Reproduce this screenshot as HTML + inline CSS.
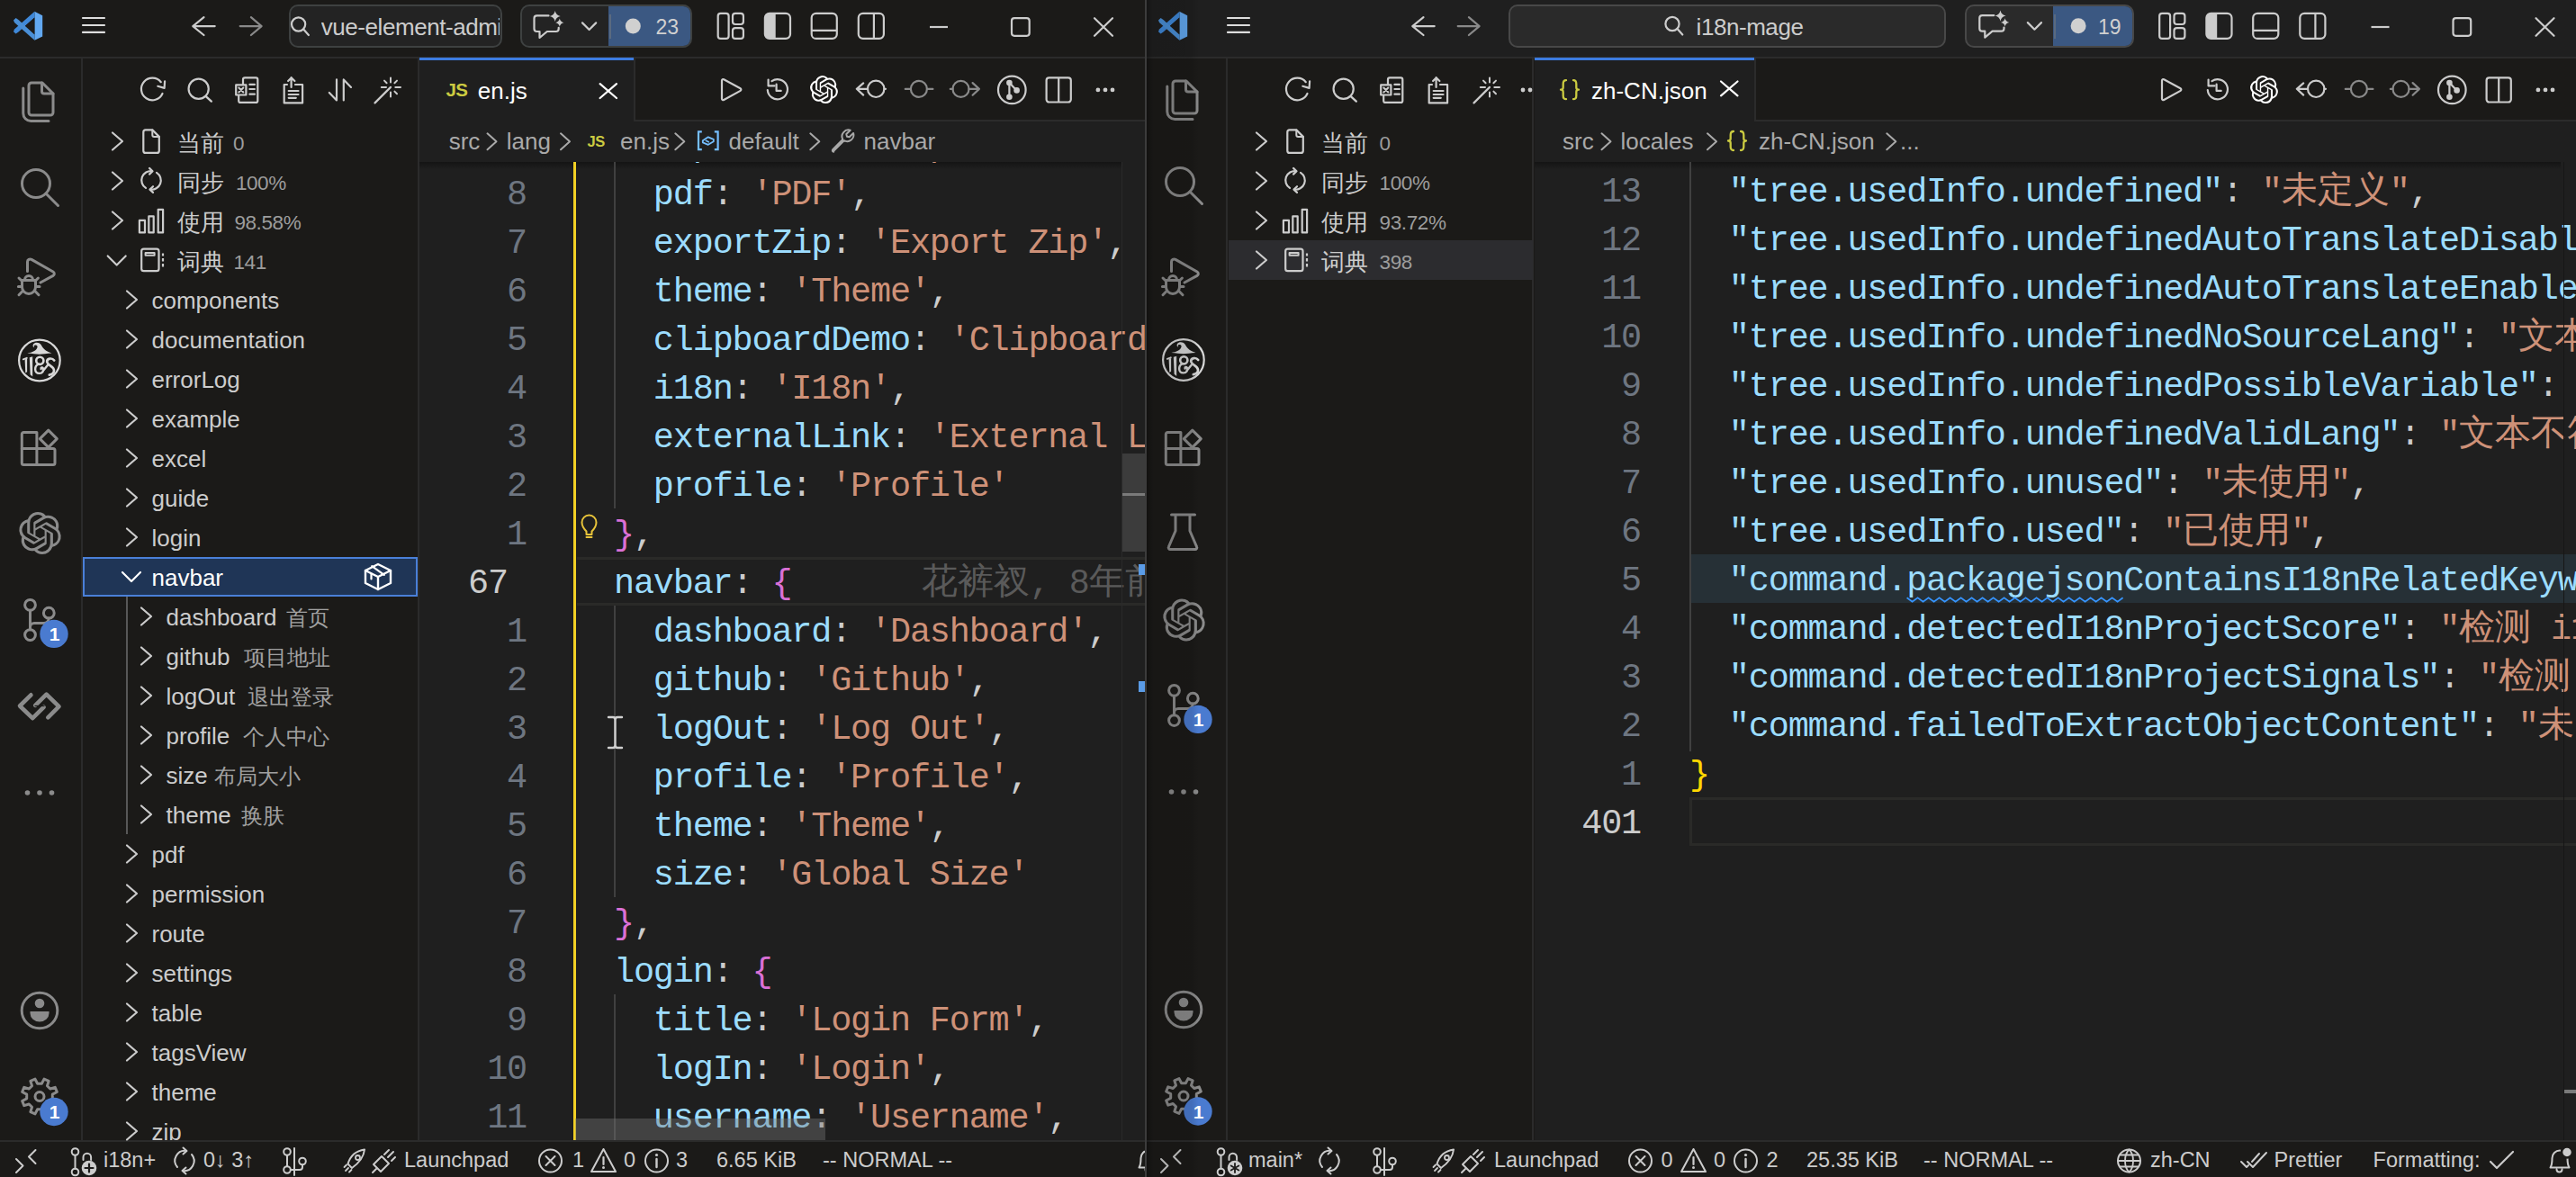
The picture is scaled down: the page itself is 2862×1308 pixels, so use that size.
<!DOCTYPE html><html><head><meta charset="utf-8"><title>VS Code</title><style>
html,body{margin:0;padding:0;width:2862px;height:1308px;overflow:hidden;background:#1b1a18}
.a{position:absolute}
.t{white-space:pre}
.code{white-space:pre;font-family:"Liberation Mono",monospace;font-size:38.5px;letter-spacing:-1.18px}
.cjk{font-size:40px;display:inline-block;width:40px;text-align:center;line-height:0;letter-spacing:0}
svg{overflow:visible}
</style></head><body><div class="a" style="left:0px;top:0px;width:1272px;height:1308px;background:#1b1a18;"></div>
<div class="a" style="left:0px;top:63px;width:1272px;height:2px;background:#2b2b2b;"></div>
<div class="a" style="left:90px;top:65px;width:2px;height:1202px;background:#2b2b2b;"></div>
<div class="a" style="left:464px;top:65px;width:2px;height:1202px;background:#2b2b2b;"></div>
<div class="a" style="left:0px;top:1267px;width:1272px;height:2px;background:#2b2b2b;"></div>
<div class="a" style="left:321.4px;top:5px;width:236.3px;height:47.5px;background:#232323;border:2px solid #3e4141;border-radius:10px;box-sizing:border-box;"></div>
<div class="a t" style="left:356.8px;top:13.79px;line-height:32px;font-size:26px;color:#cccccc;font-family:'Liberation Sans', sans-serif;width:197.90000000000003px;overflow:hidden;letter-spacing:-0.45px;">vue-element-admin</div>
<div class="a" style="left:578.2px;top:5px;width:191.0px;height:47.5px;background:#232323;border:2px solid #3e4141;border-radius:10px;box-sizing:border-box;"></div>
<div class="a" style="left:676px;top:7px;width:91.20000000000005px;height:43.5px;background:#3b5882;border-radius:0 8px 8px 0;"></div>
<div class="a" style="left:677px;top:16px;width:2px;height:27px;background:#5a6a80;"></div>
<div class="a t" style="left:728.5px;top:15.73px;line-height:29px;font-size:23px;color:#d0d0d0;font-family:'Liberation Sans', sans-serif;">23</div>
<div class="a t" style="left:196.5px;top:142.56px;line-height:32px;font-size:25.5px;color:#cccccc;font-family:'Liberation Sans', sans-serif;">当前</div>
<div class="a t" style="left:259px;top:145.60px;line-height:28px;font-size:22.5px;color:#9d9d9d;font-family:'Liberation Sans', sans-serif;letter-spacing:-0.4px;">0</div>
<div class="a t" style="left:196.5px;top:186.56px;line-height:32px;font-size:25.5px;color:#cccccc;font-family:'Liberation Sans', sans-serif;">同步</div>
<div class="a t" style="left:261.9px;top:189.60px;line-height:28px;font-size:22.5px;color:#9d9d9d;font-family:'Liberation Sans', sans-serif;letter-spacing:-0.4px;">100%</div>
<div class="a t" style="left:196.5px;top:230.56px;line-height:32px;font-size:25.5px;color:#cccccc;font-family:'Liberation Sans', sans-serif;">使用</div>
<div class="a t" style="left:260.4px;top:233.60px;line-height:28px;font-size:22.5px;color:#9d9d9d;font-family:'Liberation Sans', sans-serif;letter-spacing:-0.4px;">98.58%</div>
<div class="a t" style="left:196.5px;top:274.56px;line-height:32px;font-size:25.5px;color:#cccccc;font-family:'Liberation Sans', sans-serif;">词典</div>
<div class="a t" style="left:259.5px;top:277.60px;line-height:28px;font-size:22.5px;color:#9d9d9d;font-family:'Liberation Sans', sans-serif;letter-spacing:-0.4px;">141</div>
<div class="a t" style="left:168.5px;top:317.99px;line-height:32px;font-size:26px;color:#cccccc;font-family:'Liberation Sans', sans-serif;">components</div>
<div class="a t" style="left:168.5px;top:361.99px;line-height:32px;font-size:26px;color:#cccccc;font-family:'Liberation Sans', sans-serif;">documentation</div>
<div class="a t" style="left:168.5px;top:405.99px;line-height:32px;font-size:26px;color:#cccccc;font-family:'Liberation Sans', sans-serif;">errorLog</div>
<div class="a t" style="left:168.5px;top:449.99px;line-height:32px;font-size:26px;color:#cccccc;font-family:'Liberation Sans', sans-serif;">example</div>
<div class="a t" style="left:168.5px;top:493.99px;line-height:32px;font-size:26px;color:#cccccc;font-family:'Liberation Sans', sans-serif;">excel</div>
<div class="a t" style="left:168.5px;top:537.99px;line-height:32px;font-size:26px;color:#cccccc;font-family:'Liberation Sans', sans-serif;">guide</div>
<div class="a t" style="left:168.5px;top:581.99px;line-height:32px;font-size:26px;color:#cccccc;font-family:'Liberation Sans', sans-serif;">login</div>
<div class="a" style="left:92px;top:619px;width:372px;height:44px;background:#1f3556;border:2px solid #4a80d8;box-sizing:border-box;"></div>
<div class="a t" style="left:168.5px;top:625.99px;line-height:32px;font-size:26px;color:#ffffff;font-family:'Liberation Sans', sans-serif;">navbar</div>
<div class="a" style="left:139.5px;top:663px;width:2px;height:264px;background:#585858;"></div>
<div class="a t" style="left:184.5px;top:669.99px;line-height:32px;font-size:26px;color:#cccccc;font-family:'Liberation Sans', sans-serif;">dashboard</div>
<div class="a t" style="left:318px;top:672.18px;line-height:30px;font-size:24px;color:#a0a0a0;font-family:'Liberation Sans', sans-serif;">首页</div>
<div class="a t" style="left:184.5px;top:713.99px;line-height:32px;font-size:26px;color:#cccccc;font-family:'Liberation Sans', sans-serif;">github</div>
<div class="a t" style="left:271px;top:716.18px;line-height:30px;font-size:24px;color:#a0a0a0;font-family:'Liberation Sans', sans-serif;">项目地址</div>
<div class="a t" style="left:184.5px;top:757.99px;line-height:32px;font-size:26px;color:#cccccc;font-family:'Liberation Sans', sans-serif;">logOut</div>
<div class="a t" style="left:275px;top:760.18px;line-height:30px;font-size:24px;color:#a0a0a0;font-family:'Liberation Sans', sans-serif;">退出登录</div>
<div class="a t" style="left:184.5px;top:801.99px;line-height:32px;font-size:26px;color:#cccccc;font-family:'Liberation Sans', sans-serif;">profile</div>
<div class="a t" style="left:270px;top:804.18px;line-height:30px;font-size:24px;color:#a0a0a0;font-family:'Liberation Sans', sans-serif;">个人中心</div>
<div class="a t" style="left:184.5px;top:845.99px;line-height:32px;font-size:26px;color:#cccccc;font-family:'Liberation Sans', sans-serif;">size</div>
<div class="a t" style="left:238px;top:848.18px;line-height:30px;font-size:24px;color:#a0a0a0;font-family:'Liberation Sans', sans-serif;">布局大小</div>
<div class="a t" style="left:184.5px;top:889.99px;line-height:32px;font-size:26px;color:#cccccc;font-family:'Liberation Sans', sans-serif;">theme</div>
<div class="a t" style="left:268px;top:892.18px;line-height:30px;font-size:24px;color:#a0a0a0;font-family:'Liberation Sans', sans-serif;">换肤</div>
<div class="a t" style="left:168.5px;top:933.99px;line-height:32px;font-size:26px;color:#cccccc;font-family:'Liberation Sans', sans-serif;">pdf</div>
<div class="a t" style="left:168.5px;top:977.99px;line-height:32px;font-size:26px;color:#cccccc;font-family:'Liberation Sans', sans-serif;">permission</div>
<div class="a t" style="left:168.5px;top:1021.99px;line-height:32px;font-size:26px;color:#cccccc;font-family:'Liberation Sans', sans-serif;">route</div>
<div class="a t" style="left:168.5px;top:1065.99px;line-height:32px;font-size:26px;color:#cccccc;font-family:'Liberation Sans', sans-serif;">settings</div>
<div class="a t" style="left:168.5px;top:1109.99px;line-height:32px;font-size:26px;color:#cccccc;font-family:'Liberation Sans', sans-serif;">table</div>
<div class="a t" style="left:168.5px;top:1153.99px;line-height:32px;font-size:26px;color:#cccccc;font-family:'Liberation Sans', sans-serif;">tagsView</div>
<div class="a t" style="left:168.5px;top:1197.99px;line-height:32px;font-size:26px;color:#cccccc;font-family:'Liberation Sans', sans-serif;">theme</div>
<div class="a t" style="left:168.5px;top:1241.99px;line-height:32px;font-size:26px;color:#cccccc;font-family:'Liberation Sans', sans-serif;">zip</div>
<div class="a" style="left:466px;top:135px;width:806px;height:1132px;background:#1f1f1f;"></div>
<div class="a" style="left:466px;top:65px;width:806px;height:68px;background:#1b1a18;"></div>
<div class="a" style="left:466px;top:133px;width:806px;height:2px;background:#2b2b2b;"></div>
<div class="a" style="left:466px;top:65px;width:238px;height:70px;background:#1f1f1f;"></div>
<div class="a" style="left:466px;top:64px;width:238px;height:3px;background:#3c7be0;"></div>
<div class="a" style="left:704px;top:65px;width:2px;height:68px;background:#2b2b2b;"></div>
<div class="a t" style="left:495.5px;top:86.80px;line-height:26px;font-size:20.5px;color:#cbcb41;font-family:'Liberation Sans', sans-serif;font-weight:bold;letter-spacing:-0.6px;">JS</div>
<div class="a t" style="left:530.8px;top:84.89px;line-height:32px;font-size:26px;color:#ffffff;font-family:'Liberation Sans', sans-serif;">en.js</div>
<div class="a t" style="left:498.7px;top:141.49px;line-height:32px;font-size:26px;color:#a9a9a9;font-family:'Liberation Sans', sans-serif;">src</div>
<div class="a t" style="left:562.8px;top:141.49px;line-height:32px;font-size:26px;color:#a9a9a9;font-family:'Liberation Sans', sans-serif;">lang</div>
<div class="a t" style="left:652.5px;top:147.28px;line-height:21px;font-size:16.5px;color:#cbcb41;font-family:'Liberation Sans', sans-serif;font-weight:bold;letter-spacing:-0.4px;">JS</div>
<div class="a t" style="left:689px;top:141.49px;line-height:32px;font-size:26px;color:#a9a9a9;font-family:'Liberation Sans', sans-serif;">en.js</div>
<div class="a t" style="left:809.6px;top:141.49px;line-height:32px;font-size:26px;color:#a9a9a9;font-family:'Liberation Sans', sans-serif;">default</div>
<div class="a t" style="left:959.6px;top:141.49px;line-height:32px;font-size:26px;color:#a9a9a9;font-family:'Liberation Sans', sans-serif;">navbar</div>
<div class="a" style="left:466px;top:180px;width:780px;height:8px;background:linear-gradient(#111 0%, rgba(0,0,0,0) 100%);opacity:.8;"></div>
<div class="a" style="left:641px;top:619px;width:631px;height:54px;border-top:3px solid #2a2a28;border-bottom:3px solid #2a2a28;box-sizing:border-box;"></div>
<div class="a" style="left:682px;top:180px;width:2px;height:385px;background:#404040;"></div>
<div class="a" style="left:682px;top:673px;width:2px;height:324px;background:#404040;"></div>
<div class="a" style="left:682px;top:1105px;width:2px;height:162px;background:#404040;"></div>
<div class="a" style="left:637px;top:180px;width:3px;height:1087px;background:#f2d024;"></div>
<div class="a" style="left:466px;top:180px;width:806px;height:1087px;overflow:hidden">
<div class="a code" style="left:216px;top:-44px;height:54px;line-height:54px;"><span style="color:#cccccc">  </span><span style="color:#9cdcfe">exportPDF</span><span style="color:#cccccc">: </span><span style="color:#ce9178">&#x27;Export PDF&#x27;</span><span style="color:#cccccc">,</span></div>
<div class="a code" style="left:216px;top:10px;height:54px;line-height:54px;"><span style="color:#cccccc">  </span><span style="color:#9cdcfe">pdf</span><span style="color:#cccccc">: </span><span style="color:#ce9178">&#x27;PDF&#x27;</span><span style="color:#cccccc">,</span></div>
<div class="a code" style="left:0px;top:10px;height:54px;line-height:54px;width:119px;text-align:right;color:#6e7681">8</div>
<div class="a code" style="left:216px;top:64px;height:54px;line-height:54px;"><span style="color:#cccccc">  </span><span style="color:#9cdcfe">exportZip</span><span style="color:#cccccc">: </span><span style="color:#ce9178">&#x27;Export Zip&#x27;</span><span style="color:#cccccc">,</span></div>
<div class="a code" style="left:0px;top:64px;height:54px;line-height:54px;width:119px;text-align:right;color:#6e7681">7</div>
<div class="a code" style="left:216px;top:118px;height:54px;line-height:54px;"><span style="color:#cccccc">  </span><span style="color:#9cdcfe">theme</span><span style="color:#cccccc">: </span><span style="color:#ce9178">&#x27;Theme&#x27;</span><span style="color:#cccccc">,</span></div>
<div class="a code" style="left:0px;top:118px;height:54px;line-height:54px;width:119px;text-align:right;color:#6e7681">6</div>
<div class="a code" style="left:216px;top:172px;height:54px;line-height:54px;"><span style="color:#cccccc">  </span><span style="color:#9cdcfe">clipboardDemo</span><span style="color:#cccccc">: </span><span style="color:#ce9178">&#x27;Clipboard Demo&#x27;</span><span style="color:#cccccc">,</span></div>
<div class="a code" style="left:0px;top:172px;height:54px;line-height:54px;width:119px;text-align:right;color:#6e7681">5</div>
<div class="a code" style="left:216px;top:226px;height:54px;line-height:54px;"><span style="color:#cccccc">  </span><span style="color:#9cdcfe">i18n</span><span style="color:#cccccc">: </span><span style="color:#ce9178">&#x27;I18n&#x27;</span><span style="color:#cccccc">,</span></div>
<div class="a code" style="left:0px;top:226px;height:54px;line-height:54px;width:119px;text-align:right;color:#6e7681">4</div>
<div class="a code" style="left:216px;top:280px;height:54px;line-height:54px;"><span style="color:#cccccc">  </span><span style="color:#9cdcfe">externalLink</span><span style="color:#cccccc">: </span><span style="color:#ce9178">&#x27;External Link&#x27;</span><span style="color:#cccccc">,</span></div>
<div class="a code" style="left:0px;top:280px;height:54px;line-height:54px;width:119px;text-align:right;color:#6e7681">3</div>
<div class="a code" style="left:216px;top:334px;height:54px;line-height:54px;"><span style="color:#cccccc">  </span><span style="color:#9cdcfe">profile</span><span style="color:#cccccc">: </span><span style="color:#ce9178">&#x27;Profile&#x27;</span></div>
<div class="a code" style="left:0px;top:334px;height:54px;line-height:54px;width:119px;text-align:right;color:#6e7681">2</div>
<div class="a code" style="left:216px;top:388px;height:54px;line-height:54px;"><span style="color:#da70d6">}</span><span style="color:#cccccc">,</span></div>
<div class="a code" style="left:0px;top:388px;height:54px;line-height:54px;width:119px;text-align:right;color:#6e7681">1</div>
<div class="a code" style="left:216px;top:442px;height:54px;line-height:54px;"><span style="color:#9cdcfe">navbar</span><span style="color:#cccccc">: </span><span style="color:#da70d6">{</span></div>
<div class="a code" style="left:54px;top:442px;height:54px;line-height:54px;color:#cccccc">67</div>
<div class="a code" style="left:216px;top:496px;height:54px;line-height:54px;"><span style="color:#cccccc">  </span><span style="color:#9cdcfe">dashboard</span><span style="color:#cccccc">: </span><span style="color:#ce9178">&#x27;Dashboard&#x27;</span><span style="color:#cccccc">,</span></div>
<div class="a code" style="left:0px;top:496px;height:54px;line-height:54px;width:119px;text-align:right;color:#6e7681">1</div>
<div class="a code" style="left:216px;top:550px;height:54px;line-height:54px;"><span style="color:#cccccc">  </span><span style="color:#9cdcfe">github</span><span style="color:#cccccc">: </span><span style="color:#ce9178">&#x27;Github&#x27;</span><span style="color:#cccccc">,</span></div>
<div class="a code" style="left:0px;top:550px;height:54px;line-height:54px;width:119px;text-align:right;color:#6e7681">2</div>
<div class="a code" style="left:216px;top:604px;height:54px;line-height:54px;"><span style="color:#cccccc">  </span><span style="color:#9cdcfe">logOut</span><span style="color:#cccccc">: </span><span style="color:#ce9178">&#x27;Log Out&#x27;</span><span style="color:#cccccc">,</span></div>
<div class="a code" style="left:0px;top:604px;height:54px;line-height:54px;width:119px;text-align:right;color:#6e7681">3</div>
<div class="a code" style="left:216px;top:658px;height:54px;line-height:54px;"><span style="color:#cccccc">  </span><span style="color:#9cdcfe">profile</span><span style="color:#cccccc">: </span><span style="color:#ce9178">&#x27;Profile&#x27;</span><span style="color:#cccccc">,</span></div>
<div class="a code" style="left:0px;top:658px;height:54px;line-height:54px;width:119px;text-align:right;color:#6e7681">4</div>
<div class="a code" style="left:216px;top:712px;height:54px;line-height:54px;"><span style="color:#cccccc">  </span><span style="color:#9cdcfe">theme</span><span style="color:#cccccc">: </span><span style="color:#ce9178">&#x27;Theme&#x27;</span><span style="color:#cccccc">,</span></div>
<div class="a code" style="left:0px;top:712px;height:54px;line-height:54px;width:119px;text-align:right;color:#6e7681">5</div>
<div class="a code" style="left:216px;top:766px;height:54px;line-height:54px;"><span style="color:#cccccc">  </span><span style="color:#9cdcfe">size</span><span style="color:#cccccc">: </span><span style="color:#ce9178">&#x27;Global Size&#x27;</span></div>
<div class="a code" style="left:0px;top:766px;height:54px;line-height:54px;width:119px;text-align:right;color:#6e7681">6</div>
<div class="a code" style="left:216px;top:820px;height:54px;line-height:54px;"><span style="color:#da70d6">}</span><span style="color:#cccccc">,</span></div>
<div class="a code" style="left:0px;top:820px;height:54px;line-height:54px;width:119px;text-align:right;color:#6e7681">7</div>
<div class="a code" style="left:216px;top:874px;height:54px;line-height:54px;"><span style="color:#9cdcfe">login</span><span style="color:#cccccc">: </span><span style="color:#da70d6">{</span></div>
<div class="a code" style="left:0px;top:874px;height:54px;line-height:54px;width:119px;text-align:right;color:#6e7681">8</div>
<div class="a code" style="left:216px;top:928px;height:54px;line-height:54px;"><span style="color:#cccccc">  </span><span style="color:#9cdcfe">title</span><span style="color:#cccccc">: </span><span style="color:#ce9178">&#x27;Login Form&#x27;</span><span style="color:#cccccc">,</span></div>
<div class="a code" style="left:0px;top:928px;height:54px;line-height:54px;width:119px;text-align:right;color:#6e7681">9</div>
<div class="a code" style="left:216px;top:982px;height:54px;line-height:54px;"><span style="color:#cccccc">  </span><span style="color:#9cdcfe">logIn</span><span style="color:#cccccc">: </span><span style="color:#ce9178">&#x27;Login&#x27;</span><span style="color:#cccccc">,</span></div>
<div class="a code" style="left:0px;top:982px;height:54px;line-height:54px;width:119px;text-align:right;color:#6e7681">10</div>
<div class="a code" style="left:216px;top:1036px;height:54px;line-height:54px;"><span style="color:#cccccc">  </span><span style="color:#9cdcfe">username</span><span style="color:#cccccc">: </span><span style="color:#ce9178">&#x27;Username&#x27;</span><span style="color:#cccccc">,</span></div>
<div class="a code" style="left:0px;top:1036px;height:54px;line-height:54px;width:119px;text-align:right;color:#6e7681">11</div>
</div>
<div class="a code" style="left:1024px;top:622px;height:54px;line-height:54px;width:248px;overflow:hidden;color:#5a5a5a"><span class="cjk">花</span><span class="cjk">裤</span><span class="cjk">衩</span>, 8<span class="cjk">年</span><span class="cjk">前</span></div>
<div class="a" style="left:1246px;top:180px;width:1px;height:1087px;background:#2a2a2a;"></div>
<div class="a" style="left:1247px;top:504px;width:25px;height:109px;background:#3c3c3c;"></div>
<div class="a" style="left:1247px;top:548px;width:25px;height:3px;background:#7a7a7a;"></div>
<div class="a" style="left:1265px;top:627px;width:7px;height:12px;background:#5a9be6;"></div>
<div class="a" style="left:1265px;top:757px;width:7px;height:12px;background:#5a9be6;"></div>
<div class="a" style="left:639px;top:1243px;width:278px;height:24px;background:rgba(121,121,121,0.4);"></div>
<div class="a" style="left:0px;top:1267px;width:1272px;height:41px;background:#1b1a18;"></div>
<div class="a" style="left:0px;top:1267px;width:1272px;height:2px;background:#2b2b2b;"></div>
<div class="a t" style="left:115px;top:1275.36px;line-height:29px;font-size:23.5px;color:#cccccc;font-family:'Liberation Sans', sans-serif;">i18n+</div>
<div class="a t" style="left:226px;top:1275.36px;line-height:29px;font-size:23.5px;color:#cccccc;font-family:'Liberation Sans', sans-serif;">0↓ 3↑</div>
<div class="a t" style="left:449px;top:1275.36px;line-height:29px;font-size:23.5px;color:#cccccc;font-family:'Liberation Sans', sans-serif;">Launchpad</div>
<div class="a t" style="left:636px;top:1275.36px;line-height:29px;font-size:23.5px;color:#cccccc;font-family:'Liberation Sans', sans-serif;">1</div>
<div class="a t" style="left:693px;top:1275.36px;line-height:29px;font-size:23.5px;color:#cccccc;font-family:'Liberation Sans', sans-serif;">0</div>
<div class="a t" style="left:751px;top:1275.36px;line-height:29px;font-size:23.5px;color:#cccccc;font-family:'Liberation Sans', sans-serif;">3</div>
<div class="a t" style="left:796px;top:1275.36px;line-height:29px;font-size:23.5px;color:#cccccc;font-family:'Liberation Sans', sans-serif;">6.65 KiB</div>
<div class="a t" style="left:914px;top:1275.36px;line-height:29px;font-size:23.5px;color:#cccccc;font-family:'Liberation Sans', sans-serif;">-- NORMAL --</div>
<svg class="a" style="left:0;top:0" width="2862" height="1308" viewBox="0 0 2862 1308" fill="none"><path d="M141 323.5L152 333L141 342.5" stroke="#cccccc" stroke-width="2.2" stroke-linecap="round" stroke-linejoin="round" fill="none" /><path d="M141 367.5L152 377L141 386.5" stroke="#cccccc" stroke-width="2.2" stroke-linecap="round" stroke-linejoin="round" fill="none" /><path d="M141 411.5L152 421L141 430.5" stroke="#cccccc" stroke-width="2.2" stroke-linecap="round" stroke-linejoin="round" fill="none" /><path d="M141 455.5L152 465L141 474.5" stroke="#cccccc" stroke-width="2.2" stroke-linecap="round" stroke-linejoin="round" fill="none" /><path d="M141 499.5L152 509L141 518.5" stroke="#cccccc" stroke-width="2.2" stroke-linecap="round" stroke-linejoin="round" fill="none" /><path d="M141 543.5L152 553L141 562.5" stroke="#cccccc" stroke-width="2.2" stroke-linecap="round" stroke-linejoin="round" fill="none" /><path d="M141 587.5L152 597L141 606.5" stroke="#cccccc" stroke-width="2.2" stroke-linecap="round" stroke-linejoin="round" fill="none" /><path d="M136 636L146 646L156 636" stroke="#ffffff" stroke-width="2.2" stroke-linecap="round" stroke-linejoin="round" fill="none" /><path d="M420 627L434 634.0V648.0L420 655L406 648.0V634.0Z" stroke="#ffffff" stroke-width="2.4" stroke-linecap="round" stroke-linejoin="round" fill="none" /><path d="M406 634.0L420 641L434 634.0M420 641V655" stroke="#ffffff" stroke-width="2.4" stroke-linecap="round" stroke-linejoin="round" fill="none" /><path d="M413.2 629.1L426.8 638.9M412.5 637.5V643.5" stroke="#ffffff" stroke-width="2.2" stroke-linecap="round" stroke-linejoin="round" fill="none" /><path d="M157 675.5L168 685L157 694.5" stroke="#cccccc" stroke-width="2.2" stroke-linecap="round" stroke-linejoin="round" fill="none" /><path d="M157 719.5L168 729L157 738.5" stroke="#cccccc" stroke-width="2.2" stroke-linecap="round" stroke-linejoin="round" fill="none" /><path d="M157 763.5L168 773L157 782.5" stroke="#cccccc" stroke-width="2.2" stroke-linecap="round" stroke-linejoin="round" fill="none" /><path d="M157 807.5L168 817L157 826.5" stroke="#cccccc" stroke-width="2.2" stroke-linecap="round" stroke-linejoin="round" fill="none" /><path d="M157 851.5L168 861L157 870.5" stroke="#cccccc" stroke-width="2.2" stroke-linecap="round" stroke-linejoin="round" fill="none" /><path d="M157 895.5L168 905L157 914.5" stroke="#cccccc" stroke-width="2.2" stroke-linecap="round" stroke-linejoin="round" fill="none" /><path d="M141 939.5L152 949L141 958.5" stroke="#cccccc" stroke-width="2.2" stroke-linecap="round" stroke-linejoin="round" fill="none" /><path d="M141 983.5L152 993L141 1002.5" stroke="#cccccc" stroke-width="2.2" stroke-linecap="round" stroke-linejoin="round" fill="none" /><path d="M141 1027.5L152 1037L141 1046.5" stroke="#cccccc" stroke-width="2.2" stroke-linecap="round" stroke-linejoin="round" fill="none" /><path d="M141 1071.5L152 1081L141 1090.5" stroke="#cccccc" stroke-width="2.2" stroke-linecap="round" stroke-linejoin="round" fill="none" /><path d="M141 1115.5L152 1125L141 1134.5" stroke="#cccccc" stroke-width="2.2" stroke-linecap="round" stroke-linejoin="round" fill="none" /><path d="M141 1159.5L152 1169L141 1178.5" stroke="#cccccc" stroke-width="2.2" stroke-linecap="round" stroke-linejoin="round" fill="none" /><path d="M141 1203.5L152 1213L141 1222.5" stroke="#cccccc" stroke-width="2.2" stroke-linecap="round" stroke-linejoin="round" fill="none" /><path d="M141 1247.5L152 1257L141 1266.5" stroke="#cccccc" stroke-width="2.2" stroke-linecap="round" stroke-linejoin="round" fill="none" /><path d="M541.5 148.3L551.5 157.3L541.5 166.3" stroke="#a9a9a9" stroke-width="2" stroke-linecap="round" stroke-linejoin="round" fill="none" /><path d="M623 148.3L633 157.3L623 166.3" stroke="#a9a9a9" stroke-width="2" stroke-linecap="round" stroke-linejoin="round" fill="none" /><path d="M750.3 148.3L760.3 157.3L750.3 166.3" stroke="#a9a9a9" stroke-width="2" stroke-linecap="round" stroke-linejoin="round" fill="none" /><path d="M900.3 148.3L910.3 157.3L900.3 166.3" stroke="#a9a9a9" stroke-width="2" stroke-linecap="round" stroke-linejoin="round" fill="none" /><path d="M779.8 146.3H776.0V166.10000000000002H779.8M793.8 146.3H797.5999999999999V166.10000000000002H793.8" stroke="#75beff" stroke-width="2.2" stroke-linecap="butt" stroke-linejoin="miter" fill="none"/><path d="M780.8 156.3L786.8 152.3L792.8 154.8V157.3L786.8 160.8L780.8 158.3Z" stroke="#75beff" stroke-width="1.8" stroke-linecap="round" stroke-linejoin="round" fill="none" /><path d="M784.3 156.3L787.3 157.8" stroke="#75beff" stroke-width="1.6" stroke-linecap="round" stroke-linejoin="round" fill="none" /><path d="M926.2 167.7L937.7 156.2M937.7 156.2a7.2 7.2 0 0 0 10.4-8.3L943.7 152.29999999999998L941.0 151.7L940.3000000000001 149.0L944.7 144.7a7.2 7.2 0 0 0-8.4 10.2L925.2 166.2a1.5 1.5 0 0 0 1 2.5" stroke="#a9a9a9" stroke-width="2" stroke-linecap="round" stroke-linejoin="round" fill="none" /><path d="M38.4 12.8L47.2 17.2V40.5L38.4 44.8Z" fill="#62a8f0"/><path d="M38.4 12.8V19.5L20.5 35.5L17.6 37.6L15 35.2L16 32.5Z" fill="#3f88d8"/><path d="M15 22.4L17.6 20L20.5 22L38.4 38.2V44.8L16 25Z" fill="#4a8fd6"/><path d="M38.4 19.5L38.4 38.2L28 28.8Z" fill="#1c1b1a"/><path d="M92 20H116M92 28H116M92 35.9H116" stroke="#dddddd" stroke-width="2.2" stroke-linecap="round" stroke-linejoin="round" fill="none" /><path d="M226.5 19.2L214.3 29.1L226.5 39M214.3 29.1H238.7" stroke="#cccccc" stroke-width="2.2" stroke-linecap="round" stroke-linejoin="round" fill="none" /><path d="M278.9 19.2L290.6 29.1L278.9 39M290.6 29.1H266.7" stroke="#8a8a8a" stroke-width="2.2" stroke-linecap="round" stroke-linejoin="round" fill="none" /><circle cx="331.60" cy="27.00" r="7.6" stroke="#cccccc" stroke-width="2.2" fill="none"/><path d="M337.20000000000005 32.6L342.90000000000003 39" stroke="#cccccc" stroke-width="2.2" stroke-linecap="round" stroke-linejoin="round" fill="none" /><path d="M609.5 17.4H596.5a3 3 0 0 0-3 3V32a3 3 0 0 0 3 3H599.5V42L607.8 35H617.7a3 3 0 0 0 3-3V30.8" stroke="#cccccc" stroke-width="2.2" stroke-linecap="round" stroke-linejoin="round" fill="none" /><path d="M616.7 11.899999999999999Q617.6600000000001 16.939999999999998 622.7 17.9Q617.6600000000001 18.86 616.7 23.9Q615.74 18.86 610.7 17.9Q615.74 16.939999999999998 616.7 11.899999999999999Z" fill="#cccccc" /><path d="M621.8 20.6Q622.536 24.464 626.4 25.2Q622.536 25.936 621.8 29.799999999999997Q621.064 25.936 617.1999999999999 25.2Q621.064 24.464 621.8 20.6Z" fill="#cccccc" /><path d="M647 25.4L654.6 33L662.2 25.4" stroke="#cccccc" stroke-width="2.2" stroke-linecap="round" stroke-linejoin="round" fill="none" /><circle cx="703.3" cy="29" r="8.5" fill="#d0d0d0"/><path d="M797.7 17.8a3 3 0 0 1 3-3H806.6a3 3 0 0 1 3 3V39.9a3 3 0 0 1-3 3H800.7a3 3 0 0 1-3-3Z" stroke="#cccccc" stroke-width="2.2" stroke-linecap="round" stroke-linejoin="round" fill="none" /><path d="M814 17.8a3 3 0 0 1 3-3H822.9a3 3 0 0 1 3 3V24a3 3 0 0 1-3 3H817a3 3 0 0 1-3-3Z" stroke="#cccccc" stroke-width="2.2" stroke-linecap="round" stroke-linejoin="round" fill="none" /><path d="M814 34.1a3 3 0 0 1 3-3H822.9a3 3 0 0 1 3 3V39.9a3 3 0 0 1-3 3H817a3 3 0 0 1-3-3Z" stroke="#cccccc" stroke-width="2.2" stroke-linecap="round" stroke-linejoin="round" fill="none" /><path d="M849.9 19.8a5 5 0 0 1 5-5H873a5 5 0 0 1 5 5V37.9a5 5 0 0 1-5 5H854.9a5 5 0 0 1-5-5Z" stroke="#cccccc" stroke-width="2.2" stroke-linecap="round" stroke-linejoin="round" fill="none" /><path d="M849.9 19.8a5 5 0 0 1 5-5H861.7V42.9H854.9a5 5 0 0 1-5-5Z" fill="#cccccc" /><path d="M901.7 19.8a5 5 0 0 1 5-5H924.8a5 5 0 0 1 5 5V37.9a5 5 0 0 1-5 5H906.7a5 5 0 0 1-5-5ZM901.7 33.9H929.8" stroke="#cccccc" stroke-width="2.2" stroke-linecap="round" stroke-linejoin="round" fill="none" /><path d="M953.8 19.8a5 5 0 0 1 5-5H976.9a5 5 0 0 1 5 5V37.9a5 5 0 0 1-5 5H958.8a5 5 0 0 1-5-5ZM970.9 14.8V42.9" stroke="#cccccc" stroke-width="2.2" stroke-linecap="round" stroke-linejoin="round" fill="none" /><path d="M1033 30H1053" stroke="#cccccc" stroke-width="2.2" stroke-linecap="butt" stroke-linejoin="miter" fill="none"/><path d="M1127 20.2H1140.7a3 3 0 0 1 3 3V36.8a3 3 0 0 1-3 3H1127a3 3 0 0 1-3-3V23.2a3 3 0 0 1 3-3Z" stroke="#cccccc" stroke-width="2.2" stroke-linecap="round" stroke-linejoin="round" fill="none" /><path d="M1216 20.2L1236 39.8M1236 20.2L1216 39.8" stroke="#cccccc" stroke-width="2.2" stroke-linecap="round" stroke-linejoin="round" fill="none" /><g transform="translate(10,80)"><path d="M22 15a3 3 0 0 1 3-3H37L49 24V45a3 3 0 0 1-3 3H25a3 3 0 0 1-3-3Z" stroke="#8b8b8b" stroke-width="3" stroke-linecap="round" stroke-linejoin="round" fill="none" /><path d="M36.5 12V21.5a2.5 2.5 0 0 0 2.5 2.5H49" stroke="#8b8b8b" stroke-width="3" stroke-linecap="round" stroke-linejoin="round" fill="none" /><path d="M15.8 18V46a8.5 8.5 0 0 0 8.5 8.5H44" stroke="#8b8b8b" stroke-width="3" stroke-linecap="round" stroke-linejoin="round" fill="none" /></g><circle cx="40.00" cy="204.00" r="15.5" stroke="#8b8b8b" stroke-width="3" fill="none"/><path d="M51 215L64.5 228.5" stroke="#8b8b8b" stroke-width="3" stroke-linecap="round" stroke-linejoin="round" fill="none" /><g transform="translate(10,270)"><path d="M20.5 31.5V21a3 3 0 0 1 4.5-2.6L49 32a2.5 2.5 0 0 1 0 4.4L35 44" stroke="#8b8b8b" stroke-width="3" stroke-linecap="round" stroke-linejoin="round" fill="none" /><path d="M14.5 41.5H29.5V49a7.5 7.5 0 0 1-15 0Z" stroke="#8b8b8b" stroke-width="3" stroke-linecap="round" stroke-linejoin="round" fill="none" /><path d="M17.5 41a4.5 4.5 0 0 1 9 0" stroke="#8b8b8b" stroke-width="3" stroke-linecap="round" stroke-linejoin="round" fill="none" /><path d="M11 39L14.6 42.5M32.4 39L28.9 42.5M10.4 48.5H14.3M30 48.5H34M11 57.7L14.9 53.8M33 57.7L29.1 53.8" stroke="#8b8b8b" stroke-width="3" stroke-linecap="round" stroke-linejoin="round" fill="none" /></g><circle cx="43.90" cy="400.50" r="22.8" stroke="#d8d8d8" stroke-width="2.2" fill="none"/><path d="M30.3 392.40C36 391.80 40.5 389.50 41.5 386.00C42 384.00 40.5 383.00 38.8 383.60C37.5 384.10 37.4 385.50 38.3 386.00C36.5 386.00 36 383.50 37.5 382.00C39.5 380.20 43.5 380.30 45.5 383.00C47.5 386.50 50 390.50 57.5 392.40C52 393.00 47 393.00 43.9 393.80C40.5 393.00 35.5 393.00 30.3 392.40Z" fill="#d8d8d8" /><path d="M27.6 399.60L30.1 398.60V413.20L28.3 414.60Z" fill="#d8d8d8" /><path d="M25.8 399.40L29.8 397.80" stroke="#d8d8d8" stroke-width="1.8" stroke-linecap="round" stroke-linejoin="round" fill="none" /><path d="M32.8 397.20L36.2 396.20V418.60L33.6 416.20Z" fill="#d8d8d8" /><circle cx="44.30" cy="400.80" r="4.1" stroke="#d8d8d8" stroke-width="2.6" fill="none"/><path d="M42.8 404.60C37.8 406.80 37.8 414.60 43.6 414.90C47.2 415.10 49.2 411.80 47.9 409.30C47.1 407.90 45.2 408.40 45.6 410.00M47.5 412.50L53 405.80" stroke="#d8d8d8" stroke-width="2.4" stroke-linecap="round" stroke-linejoin="round" fill="none" /><path d="M60.2 400.50C58 397.50 52 397.80 52.2 402.00C52.5 406.00 59.8 406.80 60 411.50C60.2 414.80 57 416.30 54.8 416.60" stroke="#d8d8d8" stroke-width="2.7" stroke-linecap="round" stroke-linejoin="round" fill="none" /><g transform="translate(10,460)"><path d="M14.3 22.5a2 2 0 0 1 2-2H30.9V56.5H16.3a2 2 0 0 1-2-2Z" stroke="#8b8b8b" stroke-width="3" stroke-linecap="round" stroke-linejoin="round" fill="none" /><path d="M14.3 38.4H49a2 2 0 0 1 2 2V54.5a2 2 0 0 1-2 2H30.9" stroke="#8b8b8b" stroke-width="3" stroke-linecap="round" stroke-linejoin="round" fill="none" /><path d="M43.8 18.1L53.3 27.6L43.8 37.1L34.3 27.6Z" stroke="#8b8b8b" stroke-width="3" stroke-linecap="round" stroke-linejoin="round" fill="none" /></g><g transform="translate(21.00,569.00) scale(1.9583)"><path d="M22.2819 9.8211a5.9847 5.9847 0 0 0-.5157-4.9108 6.0462 6.0462 0 0 0-6.5098-2.9A6.0651 6.0651 0 0 0 4.9807 4.1818a5.9847 5.9847 0 0 0-3.9977 2.9 6.0462 6.0462 0 0 0 .7427 7.0966 5.98 5.98 0 0 0 .511 4.9107 6.051 6.051 0 0 0 6.5146 2.9001A5.9847 5.9847 0 0 0 13.2599 24a6.0557 6.0557 0 0 0 5.7718-4.2058 5.9894 5.9894 0 0 0 3.9977-2.9001 6.0557 6.0557 0 0 0-.7475-7.0729zm-9.022 12.6081a4.4755 4.4755 0 0 1-2.8764-1.0408l.1419-.0804 4.7783-2.7582a.7948.7948 0 0 0 .3927-.6813v-6.7369l2.02 1.1686a.071.071 0 0 1 .038.052v5.5826a4.504 4.504 0 0 1-4.4945 4.4944zm-9.6607-4.1254a4.4708 4.4708 0 0 1-.5346-3.0137l.142.0852 4.783 2.7582a.7712.7712 0 0 0 .7806 0l5.8428-3.3685v2.3324a.0804.0804 0 0 1-.0332.0615L9.74 19.9502a4.4992 4.4992 0 0 1-6.1408-1.6464zM2.3408 7.8956a4.485 4.485 0 0 1 2.3655-1.9728V11.6a.7664.7664 0 0 0 .3879.6765l5.8144 3.3543-2.0201 1.1685a.0757.0757 0 0 1-.071 0l-4.8303-2.7865A4.504 4.504 0 0 1 2.3408 7.872zm16.5963 3.8558L13.1038 8.364 15.1192 7.2a.0757.0757 0 0 1 .071 0l4.8303 2.7913a4.4944 4.4944 0 0 1-.6765 8.1042v-5.6772a.79.79 0 0 0-.407-.667zm2.0107-3.0231l-.142-.0852-4.7735-2.7818a.7759.7759 0 0 0-.7854 0L9.409 9.2297V6.8974a.0662.0662 0 0 1 .0284-.0615l4.8303-2.7866a4.4992 4.4992 0 0 1 6.6802 4.66zM8.3065 12.863l-2.02-1.1638a.0804.0804 0 0 1-.038-.0567V6.0742a4.4992 4.4992 0 0 1 7.3757-3.4537l-.142.0805L8.704 5.459a.7948.7948 0 0 0-.3927.6813zm1.0976-2.3654l2.602-1.4998 2.6069 1.4998v2.9994l-2.5974 1.4997-2.6067-1.4997Z" fill="#8b8b8b"/></g><g transform="translate(10,650)"><circle cx="23.50" cy="22.30" r="5.9" stroke="#8b8b8b" stroke-width="3" fill="none"/><circle cx="44.30" cy="31.20" r="5.9" stroke="#8b8b8b" stroke-width="3" fill="none"/><circle cx="23.50" cy="55.60" r="5.9" stroke="#8b8b8b" stroke-width="3" fill="none"/><path d="M23.5 28.2V49.7" stroke="#8b8b8b" stroke-width="3" stroke-linecap="round" stroke-linejoin="round" fill="none" /><path d="M23.5 47a4.5 4.5 0 0 1 4.5-4.5H38a6 6 0 0 0 6.3-5.4" stroke="#8b8b8b" stroke-width="3" stroke-linecap="round" stroke-linejoin="round" fill="none" /></g><circle cx="60" cy="704.4" r="15.7" fill="#4a7bd0"/><text x="60.5" y="711.9" text-anchor="middle" font-family="Liberation Sans" font-weight="bold" font-size="21" fill="#ffffff">1</text><path d="M34.4 772.3L22 784.5L36.2 798.2L48.6 785.8" stroke="#8b8b8b" stroke-width="4.6" stroke-linecap="round" stroke-linejoin="round" fill="none" /><path d="M53.3 797.3L65.5 785.2L51.6 771.6L39.2 783.8" stroke="#8b8b8b" stroke-width="4.6" stroke-linecap="round" stroke-linejoin="round" fill="none" /><path d="M38.5 784.5H49.5" stroke="#1b1a18" stroke-width="1.2" stroke-linecap="butt" stroke-linejoin="miter" fill="none"/><circle cx="30.50" cy="881.00" r="2.8" stroke="none" stroke-width="0" fill="#8b8b8b"/><circle cx="44.00" cy="881.00" r="2.8" stroke="none" stroke-width="0" fill="#8b8b8b"/><circle cx="57.50" cy="881.00" r="2.8" stroke="none" stroke-width="0" fill="#8b8b8b"/><circle cx="44.00" cy="1123.00" r="19.8" stroke="#8b8b8b" stroke-width="3" fill="none"/><circle cx="44.00" cy="1115.00" r="5.3" stroke="none" stroke-width="0" fill="#8b8b8b"/><path d="M33.5 1124H54.5V1126a10.5 9.5 0 0 1-21 0Z" fill="#8b8b8b" /><path d="M58.31 1220.85 L63.36 1223.50 L61.23 1228.66 L55.78 1226.96 L52.46 1230.28 L54.16 1235.73 L49.00 1237.86 L46.35 1232.81 L41.65 1232.81 L39.00 1237.86 L33.84 1235.73 L35.54 1230.28 L32.22 1226.96 L26.77 1228.66 L24.64 1223.50 L29.69 1220.85 L29.69 1216.15 L24.64 1213.50 L26.77 1208.34 L32.22 1210.04 L35.54 1206.72 L33.84 1201.27 L39.00 1199.14 L41.65 1204.19 L46.35 1204.19 L49.00 1199.14 L54.16 1201.27 L52.46 1206.72 L55.78 1210.04 L61.23 1208.34 L63.36 1213.50 L58.31 1216.15Z" stroke="#8b8b8b" stroke-width="3" stroke-linecap="round" stroke-linejoin="round" fill="none" /><circle cx="44.00" cy="1218.50" r="5" stroke="#8b8b8b" stroke-width="3" fill="none"/><circle cx="60" cy="1235.5" r="15.7" fill="#4a7bd0"/><text x="60.5" y="1243.0" text-anchor="middle" font-family="Liberation Sans" font-weight="bold" font-size="21" fill="#ffffff">1</text><path d="M180.5 104A12.3 12.3 0 1 1 178.8 91.2" stroke="#cccccc" stroke-width="2.2" stroke-linecap="round" stroke-linejoin="round" fill="none" /><path d="M183.1 90.3L182.6 97.9L175.3 95.8" stroke="#cccccc" stroke-width="2.2" stroke-linecap="round" stroke-linejoin="round" fill="none" /><circle cx="220.65" cy="98.75" r="11.1" stroke="#cccccc" stroke-width="2.2" fill="none"/><path d="M228.8 107.2L234.8 112.6" stroke="#cccccc" stroke-width="2.4" stroke-linecap="round" stroke-linejoin="round" fill="none" /><path d="M270 93.3V88.4a2 2 0 0 1 2-2H284.3a2 2 0 0 1 2 2V111.9a2 2 0 0 1-2 2H267.2a2 2 0 0 1-2-2V106.6" stroke="#cccccc" stroke-width="2.2" stroke-linecap="round" stroke-linejoin="round" fill="none" /><path d="M262.2 94.4H273.4V105.5H262.2Z" stroke="#cccccc" stroke-width="2.2" stroke-linecap="round" stroke-linejoin="round" fill="none" /><path d="M265.3 97.5L270.3 102.5M270.3 97.5L265.3 102.5" stroke="#cccccc" stroke-width="2" stroke-linecap="round" stroke-linejoin="round" fill="none" /><path d="M277.4 93.9H282.9M277.4 99H282.9M277.4 104.7H282.9" stroke="#cccccc" stroke-width="2.2" stroke-linecap="round" stroke-linejoin="round" fill="none" /><path d="M323.6 96.9V86.2M320.1 90L323.6 86.4L327.4 90" stroke="#cccccc" stroke-width="2.2" stroke-linecap="round" stroke-linejoin="round" fill="none" /><path d="M319 94H315.7V114.4H336.1V94H328" stroke="#cccccc" stroke-width="2.2" stroke-linecap="round" stroke-linejoin="round" fill="none" /><path d="M320.7 101H331.5M320.7 105H331.5M320.7 108.8H328.8" stroke="#cccccc" stroke-width="2.2" stroke-linecap="round" stroke-linejoin="round" fill="none" /><path d="M374 88.4V111.5L365.8 103M381.8 111.5V88.4L390 96.9" stroke="#cccccc" stroke-width="2.2" stroke-linecap="round" stroke-linejoin="round" fill="none" /><g transform="translate(0,0)"><path d="M416.5 114.4L434 96.9" stroke="#cccccc" stroke-width="2.2" stroke-linecap="round" stroke-linejoin="round" fill="none" /><path d="M434 86.4V91.6M434 102.6V107.4M423.8 96.9H429M439.3 96.9H445M427 89.6L429.6 92.2M441 89.6L438.4 92.2M438.4 101.6L441 104.2" stroke="#cccccc" stroke-width="2" stroke-linecap="round" stroke-linejoin="round" fill="none" /></g><path d="M125 147.5L136 157L125 166.5" stroke="#cccccc" stroke-width="2.2" stroke-linecap="round" stroke-linejoin="round" fill="none" /><path d="M125 191.5L136 201L125 210.5" stroke="#cccccc" stroke-width="2.2" stroke-linecap="round" stroke-linejoin="round" fill="none" /><path d="M125 235.5L136 245L125 254.5" stroke="#cccccc" stroke-width="2.2" stroke-linecap="round" stroke-linejoin="round" fill="none" /><path d="M119.7 284.5L129.7 294.5L139.7 284.5" stroke="#cccccc" stroke-width="2.2" stroke-linecap="round" stroke-linejoin="round" fill="none" /><path d="M159.3 146.9a2.5 2.5 0 0 1 2.5-2.5H169.3L176.8 151.9V167.4a2.5 2.5 0 0 1-2.5 2.5H161.8a2.5 2.5 0 0 1-2.5-2.5Z" stroke="#cccccc" stroke-width="2.2" stroke-linecap="round" stroke-linejoin="round" fill="none" /><path d="M169.3 144.4V149.9a2 2 0 0 0 2 2H176.8" stroke="#cccccc" stroke-width="2" stroke-linecap="round" stroke-linejoin="round" fill="none" /><path d="M162 208.9A10.2 10.2 0 0 1 169 190.20000000000002" stroke="#cccccc" stroke-width="2.2" stroke-linecap="round" stroke-linejoin="round" fill="none" /><path d="M166 186.9L169.5 190.20000000000002L166 193.6" stroke="#cccccc" stroke-width="2.2" stroke-linecap="round" stroke-linejoin="round" fill="none" /><path d="M174 191.9A10.2 10.2 0 0 1 167 210.6" stroke="#cccccc" stroke-width="2.2" stroke-linecap="round" stroke-linejoin="round" fill="none" /><path d="M170 213.9L166.5 210.6L170 207.20000000000002" stroke="#cccccc" stroke-width="2.2" stroke-linecap="round" stroke-linejoin="round" fill="none" /><path d="M154.9 244.89999999999998H161.0V258.4H154.9Z" stroke="#cccccc" stroke-width="2.2" stroke-linecap="round" stroke-linejoin="round" fill="none" /><path d="M165.3 240.39999999999998H170.70000000000002V258.4H165.3Z" stroke="#cccccc" stroke-width="2.2" stroke-linecap="round" stroke-linejoin="round" fill="none" /><path d="M175.70000000000002 232.79999999999998H181.1V258.4H175.70000000000002Z" stroke="#cccccc" stroke-width="2.2" stroke-linecap="round" stroke-linejoin="round" fill="none" /><path d="M159.7 276.6H174.0a2.5 2.5 0 0 1 2.5 2.5V298.7a2.5 2.5 0 0 1-2.5 2.5H159.7a2.5 2.5 0 0 1-2.5-2.5V279.1a2.5 2.5 0 0 1 2.5-2.5Z" stroke="#cccccc" stroke-width="2.2" stroke-linecap="round" stroke-linejoin="round" fill="none" /><path d="M161.6 281.0H171.6V283.7H161.6Z" stroke="#cccccc" stroke-width="2" stroke-linecap="round" stroke-linejoin="round" fill="none" /><path d="M181.0 281.5V284.5M181.0 287.0V290.5M181.0 293.0V296.5" stroke="#cccccc" stroke-width="2.2" stroke-linecap="butt" stroke-linejoin="miter" fill="none"/><path d="M802 89.5a1.5 1.5 0 0 1 2.2-1.3L822.6 98.3a1.5 1.5 0 0 1 0 2.6L804.2 111a1.5 1.5 0 0 1-2.2-1.3Z" stroke="#cccccc" stroke-width="2.2" stroke-linecap="round" stroke-linejoin="round" fill="none" /><path d="M852.8 100A11.1 11.1 0 1 0 857.5 90.2" stroke="#cccccc" stroke-width="2.2" stroke-linecap="round" stroke-linejoin="round" fill="none" /><path d="M853.6 88.5V95.4H860.5" stroke="#cccccc" stroke-width="2.2" stroke-linecap="round" stroke-linejoin="round" fill="none" /><path d="M862.6 93.7V100.9H867.7" stroke="#cccccc" stroke-width="2.2" stroke-linecap="round" stroke-linejoin="round" fill="none" /><g transform="translate(900.00,84.10) scale(1.2917)"><path d="M22.2819 9.8211a5.9847 5.9847 0 0 0-.5157-4.9108 6.0462 6.0462 0 0 0-6.5098-2.9A6.0651 6.0651 0 0 0 4.9807 4.1818a5.9847 5.9847 0 0 0-3.9977 2.9 6.0462 6.0462 0 0 0 .7427 7.0966 5.98 5.98 0 0 0 .511 4.9107 6.051 6.051 0 0 0 6.5146 2.9001A5.9847 5.9847 0 0 0 13.2599 24a6.0557 6.0557 0 0 0 5.7718-4.2058 5.9894 5.9894 0 0 0 3.9977-2.9001 6.0557 6.0557 0 0 0-.7475-7.0729zm-9.022 12.6081a4.4755 4.4755 0 0 1-2.8764-1.0408l.1419-.0804 4.7783-2.7582a.7948.7948 0 0 0 .3927-.6813v-6.7369l2.02 1.1686a.071.071 0 0 1 .038.052v5.5826a4.504 4.504 0 0 1-4.4945 4.4944zm-9.6607-4.1254a4.4708 4.4708 0 0 1-.5346-3.0137l.142.0852 4.783 2.7582a.7712.7712 0 0 0 .7806 0l5.8428-3.3685v2.3324a.0804.0804 0 0 1-.0332.0615L9.74 19.9502a4.4992 4.4992 0 0 1-6.1408-1.6464zM2.3408 7.8956a4.485 4.485 0 0 1 2.3655-1.9728V11.6a.7664.7664 0 0 0 .3879.6765l5.8144 3.3543-2.0201 1.1685a.0757.0757 0 0 1-.071 0l-4.8303-2.7865A4.504 4.504 0 0 1 2.3408 7.872zm16.5963 3.8558L13.1038 8.364 15.1192 7.2a.0757.0757 0 0 1 .071 0l4.8303 2.7913a4.4944 4.4944 0 0 1-.6765 8.1042v-5.6772a.79.79 0 0 0-.407-.667zm2.0107-3.0231l-.142-.0852-4.7735-2.7818a.7759.7759 0 0 0-.7854 0L9.409 9.2297V6.8974a.0662.0662 0 0 1 .0284-.0615l4.8303-2.7866a4.4992 4.4992 0 0 1 6.6802 4.66zM8.3065 12.863l-2.02-1.1638a.0804.0804 0 0 1-.038-.0567V6.0742a4.4992 4.4992 0 0 1 7.3757-3.4537l-.142.0805L8.704 5.459a.7948.7948 0 0 0-.3927.6813zm1.0976-2.3654l2.602-1.4998 2.6069 1.4998v2.9994l-2.5974 1.4997-2.6067-1.4997Z" fill="#ffffff"/></g><path d="M959.2 92.4L951.8 98.8L959.2 105.6M951.8 98.8H963.8" stroke="#cccccc" stroke-width="2.2" stroke-linecap="round" stroke-linejoin="round" fill="none" /><circle cx="973.20" cy="98.80" r="9.2" stroke="#cccccc" stroke-width="2.2" fill="none"/><path d="M982.4 98.8H984" stroke="#cccccc" stroke-width="2.2" stroke-linecap="round" stroke-linejoin="round" fill="none" /><circle cx="1020.90" cy="98.90" r="9" stroke="#8a8a8a" stroke-width="2.2" fill="none"/><path d="M1005.8 98.9H1011.9M1029.9 98.9H1036.4" stroke="#8a8a8a" stroke-width="2.2" stroke-linecap="round" stroke-linejoin="round" fill="none" /><circle cx="1067.50" cy="98.90" r="9" stroke="#8a8a8a" stroke-width="2.2" fill="none"/><path d="M1055.8 98.9H1058.5M1076.5 98.9H1087.9M1080.6 92.1L1087.9 98.9L1080.6 105.7" stroke="#8a8a8a" stroke-width="2.2" stroke-linecap="round" stroke-linejoin="round" fill="none" /><circle cx="1124.30" cy="99.90" r="15.3" stroke="#cccccc" stroke-width="2.2" fill="none"/><path d="M1121.4 92.1V107.7M1121.4 92.1L1129.6 100.4" stroke="#cccccc" stroke-width="2.2" stroke-linecap="round" stroke-linejoin="round" fill="none" /><circle cx="1121.40" cy="92.10" r="3.3" stroke="none" stroke-width="0" fill="#cccccc"/><circle cx="1121.40" cy="107.70" r="3.3" stroke="none" stroke-width="0" fill="#cccccc"/><circle cx="1129.60" cy="100.40" r="3.3" stroke="none" stroke-width="0" fill="#cccccc"/><path d="M1165.6 86.3H1186.8a3 3 0 0 1 3 3V110.5a3 3 0 0 1-3 3H1165.6a3 3 0 0 1-3-3V89.3a3 3 0 0 1 3-3ZM1176.2 86.3V113.5" stroke="#cccccc" stroke-width="2.2" stroke-linecap="round" stroke-linejoin="round" fill="none" /><circle cx="1219.90" cy="99.90" r="2.4" stroke="none" stroke-width="0" fill="#cccccc"/><circle cx="1228.00" cy="99.90" r="2.4" stroke="none" stroke-width="0" fill="#cccccc"/><circle cx="1236.00" cy="99.90" r="2.4" stroke="none" stroke-width="0" fill="#cccccc"/><path d="M666.6 93.2L685.0 109.0M685.0 93.2L666.6 109.0" stroke="#ffffff" stroke-width="2.2" stroke-linecap="round" stroke-linejoin="round" fill="none" /><path d="M653 567.5C650.5 570 649.5 572.5 649.5 575.5A7.5 7.5 0 0 0 664.5 575.5C664.5 572.5 663.5 570 661 567.5" stroke="#e8c43a" stroke-width="0" stroke-linecap="round" stroke-linejoin="round" fill="none" /><path d="M18 1288L25.5 1295.5L18 1303M39.5 1278L32 1285.5L39.5 1293" stroke="#cccccc" stroke-width="2" stroke-linecap="round" stroke-linejoin="round" fill="none" /><circle cx="83.50" cy="1280.00" r="3.8" stroke="#cccccc" stroke-width="2" fill="none"/><circle cx="83.50" cy="1302.50" r="3.8" stroke="#cccccc" stroke-width="2" fill="none"/><path d="M83.5 1284V1298.5" stroke="#cccccc" stroke-width="2" stroke-linecap="round" stroke-linejoin="round" fill="none" /><path d="M92.5 1289V1286a4.3 4.3 0 0 1 8.6 0V1289" stroke="#cccccc" stroke-width="2" stroke-linecap="round" stroke-linejoin="round" fill="none" /><circle cx="99" cy="1298" r="8.3" fill="#cccccc"/><path d="M99 1293.5V1302.5M94.5 1298H103.5" stroke="#1c1b1a" stroke-width="2.2" stroke-linecap="round" stroke-linejoin="round" fill="none" /><path d="M197 1297A11 11 0 0 1 207 1279" stroke="#cccccc" stroke-width="2" stroke-linecap="round" stroke-linejoin="round" fill="none" /><path d="M203.5 1275.5L207.5 1279L203.5 1282.5" stroke="#cccccc" stroke-width="2" stroke-linecap="round" stroke-linejoin="round" fill="none" /><path d="M213 1283A11 11 0 0 1 203 1301" stroke="#cccccc" stroke-width="2" stroke-linecap="round" stroke-linejoin="round" fill="none" /><path d="M206.5 1304.5L202.5 1301L206.5 1297.5" stroke="#cccccc" stroke-width="2" stroke-linecap="round" stroke-linejoin="round" fill="none" /><circle cx="319.00" cy="1280.00" r="3.8" stroke="#cccccc" stroke-width="2" fill="none"/><circle cx="319.00" cy="1300.00" r="3.8" stroke="#cccccc" stroke-width="2" fill="none"/><circle cx="336.00" cy="1290.50" r="3.8" stroke="#cccccc" stroke-width="2" fill="none"/><path d="M319 1284V1296M327 1276V1306M336 1294.5V1297a3 3 0 0 1-3 3H323" stroke="#cccccc" stroke-width="2" stroke-linecap="round" stroke-linejoin="round" fill="none" /><path d="M389 1296L386.5 1293.5C389 1285 395 1279 405 1277.5C404 1287 398 1293 391 1298Z" stroke="#cccccc" stroke-width="2" stroke-linecap="round" stroke-linejoin="round" fill="none" /><circle cx="397.50" cy="1286.50" r="2.5" stroke="#cccccc" stroke-width="1.8" fill="none"/><path d="M384 1301L387 1298M382.5 1297L385 1294.5M388 1302.5L390.5 1300" stroke="#cccccc" stroke-width="1.8" stroke-linecap="round" stroke-linejoin="round" fill="none" /><path d="M414 1303L419 1298M419 1298L423 1302L432 1293L424 1285L415 1294Z" stroke="#cccccc" stroke-width="2" stroke-linecap="round" stroke-linejoin="round" fill="none" /><path d="M431 1286L437 1280M427 1283L432 1278M435 1290L439 1286" stroke="#cccccc" stroke-width="2" stroke-linecap="round" stroke-linejoin="round" fill="none" /><circle cx="611.50" cy="1290.00" r="12.5" stroke="#cccccc" stroke-width="2" fill="none"/><path d="M606.5 1285L616.5 1295M616.5 1285L606.5 1295" stroke="#cccccc" stroke-width="2" stroke-linecap="round" stroke-linejoin="round" fill="none" /><path d="M670.5 1277L684 1302H657Z" stroke="#cccccc" stroke-width="2" stroke-linecap="round" stroke-linejoin="round" fill="none" /><path d="M670.5 1286V1294" stroke="#cccccc" stroke-width="2.2" stroke-linecap="round" stroke-linejoin="round" fill="none" /><circle cx="670.50" cy="1297.50" r="1.5" stroke="none" stroke-width="0" fill="#cccccc"/><circle cx="729.50" cy="1290.00" r="12.5" stroke="#cccccc" stroke-width="2" fill="none"/><path d="M729.5 1288V1297" stroke="#cccccc" stroke-width="2.4" stroke-linecap="round" stroke-linejoin="round" fill="none" /><circle cx="729.50" cy="1283.50" r="1.6" stroke="none" stroke-width="0" fill="#cccccc"/><path d="M651.5 590.5C648.5 587.5 646.5 584.5 646.5 580.5A8 8 0 0 1 662.5 580.5C662.5 584.5 660.5 587.5 657.5 590.5V594H651.5ZM651.5 597H657.5" stroke="#e8c43a" stroke-width="2" stroke-linecap="round" stroke-linejoin="round" fill="none" /><path d="M676 797H681Q683.5 797 683.5 800V828Q683.5 831 681 831H676M691 797H686Q683.5 797 683.5 800M683.5 828Q683.5 831 686 831H691" stroke="#d0d0d0" stroke-width="2.4" stroke-linecap="round" stroke-linejoin="round" fill="none" /><g transform="translate(-1568,0)"><path d="M2833.5 1297.5C2835.5 1294.5 2835.5 1292 2835.5 1287A8.5 8.5 0 0 1 2852.5 1287C2852.5 1292 2852.5 1294.5 2854.5 1297.5ZM2840.5 1299.5a3 3 0 0 0 6 0" stroke="#cccccc" stroke-width="2" stroke-linecap="round" stroke-linejoin="round" fill="none" /></g></svg>
<div class="a" style="left:1274px;top:0px;width:1588px;height:1308px;background:#1b1a18;"></div>
<div class="a" style="left:1274px;top:0px;width:1588px;height:63px;background:#1f1f1f;"></div>
<div class="a" style="left:1274px;top:63px;width:1588px;height:2px;background:#2b2b2b;"></div>
<div class="a" style="left:1362px;top:65px;width:2px;height:1202px;background:#2b2b2b;"></div>
<div class="a" style="left:1702px;top:65px;width:2px;height:1202px;background:#2b2b2b;"></div>
<div class="a" style="left:1274px;top:1267px;width:1588px;height:2px;background:#2b2b2b;"></div>
<div class="a" style="left:1675.5px;top:5px;width:486.5px;height:47.5px;background:#2a2a2a;border:2px solid #484848;border-radius:10px;box-sizing:border-box;"></div>
<div class="a t" style="left:1884.6px;top:13.79px;line-height:32px;font-size:26px;color:#cccccc;font-family:'Liberation Sans', sans-serif;width:274.4000000000001px;overflow:hidden;letter-spacing:-0.45px;">i18n-mage</div>
<div class="a" style="left:2183.4px;top:5px;width:187.9000000000001px;height:47.5px;background:#2a2a2a;border:2px solid #484848;border-radius:10px;box-sizing:border-box;"></div>
<div class="a" style="left:2280.7px;top:7px;width:88.60000000000036px;height:43.5px;background:#3b5882;border-radius:0 8px 8px 0;"></div>
<div class="a" style="left:2281.7px;top:16px;width:2px;height:27px;background:#5a6a80;"></div>
<div class="a t" style="left:2331px;top:15.73px;line-height:29px;font-size:23px;color:#d0d0d0;font-family:'Liberation Sans', sans-serif;">19</div>
<div class="a" style="left:1365px;top:267px;width:338px;height:44px;background:#2c2c2f;"></div>
<div class="a t" style="left:1468px;top:142.56px;line-height:32px;font-size:25.5px;color:#cccccc;font-family:'Liberation Sans', sans-serif;">当前</div>
<div class="a t" style="left:1532.6px;top:145.60px;line-height:28px;font-size:22.5px;color:#9d9d9d;font-family:'Liberation Sans', sans-serif;letter-spacing:-0.4px;">0</div>
<div class="a t" style="left:1468px;top:186.56px;line-height:32px;font-size:25.5px;color:#cccccc;font-family:'Liberation Sans', sans-serif;">同步</div>
<div class="a t" style="left:1532.6px;top:189.60px;line-height:28px;font-size:22.5px;color:#9d9d9d;font-family:'Liberation Sans', sans-serif;letter-spacing:-0.4px;">100%</div>
<div class="a t" style="left:1468px;top:230.56px;line-height:32px;font-size:25.5px;color:#cccccc;font-family:'Liberation Sans', sans-serif;">使用</div>
<div class="a t" style="left:1532.6px;top:233.60px;line-height:28px;font-size:22.5px;color:#9d9d9d;font-family:'Liberation Sans', sans-serif;letter-spacing:-0.4px;">93.72%</div>
<div class="a t" style="left:1468px;top:274.56px;line-height:32px;font-size:25.5px;color:#cccccc;font-family:'Liberation Sans', sans-serif;">词典</div>
<div class="a t" style="left:1532.6px;top:277.60px;line-height:28px;font-size:22.5px;color:#9d9d9d;font-family:'Liberation Sans', sans-serif;letter-spacing:-0.4px;">398</div>
<div class="a" style="left:1705px;top:135px;width:1157px;height:1132px;background:#1f1f1f;"></div>
<div class="a" style="left:1705px;top:65px;width:1157px;height:68px;background:#1b1a18;"></div>
<div class="a" style="left:1705px;top:133px;width:1157px;height:2px;background:#2b2b2b;"></div>
<div class="a" style="left:1705px;top:65px;width:244px;height:70px;background:#1f1f1f;"></div>
<div class="a" style="left:1705px;top:64px;width:244px;height:3px;background:#3c7be0;"></div>
<div class="a" style="left:1949px;top:65px;width:2px;height:68px;background:#2b2b2b;"></div>
<div class="a t" style="left:1768px;top:84.89px;line-height:32px;font-size:26px;color:#ffffff;font-family:'Liberation Sans', sans-serif;">zh-CN.json</div>
<div class="a t" style="left:1736px;top:141.49px;line-height:32px;font-size:26px;color:#a9a9a9;font-family:'Liberation Sans', sans-serif;">src</div>
<div class="a t" style="left:1800.5px;top:141.49px;line-height:32px;font-size:26px;color:#a9a9a9;font-family:'Liberation Sans', sans-serif;">locales</div>
<div class="a t" style="left:1954px;top:141.49px;line-height:32px;font-size:26px;color:#a9a9a9;font-family:'Liberation Sans', sans-serif;">zh-CN.json</div>
<div class="a t" style="left:2111px;top:141.49px;line-height:32px;font-size:26px;color:#a9a9a9;font-family:'Liberation Sans', sans-serif;">...</div>
<div class="a" style="left:1705px;top:180px;width:1140px;height:8px;background:linear-gradient(#111 0%, rgba(0,0,0,0) 100%);opacity:.8;"></div>
<div class="a" style="left:1877px;top:616px;width:985px;height:54px;background:#263036;"></div>
<div class="a" style="left:1877px;top:886px;width:985px;height:54px;border:3px solid #2a2a28;border-right:none;box-sizing:border-box;"></div>
<div class="a" style="left:1877px;top:180px;width:2px;height:655px;background:#404040;"></div>
<div class="a" style="left:1705px;top:180px;width:1157px;height:1087px;overflow:hidden">
<div class="a code" style="left:172px;top:-47px;height:54px;line-height:54px;">  <span style="color:#9cdcfe">&quot;tree.usedInfo.undefinedAutoTranslate&quot;</span><span style="color:#cccccc">: </span><span style="color:#ce9178">&quot;<span class="cjk">未</span><span class="cjk">定</span><span class="cjk">义</span>&quot;</span><span style="color:#cccccc">,</span></div>
<div class="a code" style="left:172px;top:7px;height:54px;line-height:54px;">  <span style="color:#9cdcfe">&quot;tree.usedInfo.undefined&quot;</span><span style="color:#cccccc">: </span><span style="color:#ce9178">&quot;<span class="cjk">未</span><span class="cjk">定</span><span class="cjk">义</span>&quot;</span><span style="color:#cccccc">,</span></div>
<div class="a code" style="left:0px;top:7px;height:54px;line-height:54px;width:118px;text-align:right;color:#6e7681">13</div>
<div class="a code" style="left:172px;top:61px;height:54px;line-height:54px;">  <span style="color:#9cdcfe">&quot;tree.usedInfo.undefinedAutoTranslateDisabled&quot;</span><span style="color:#cccccc">: </span><span style="color:#ce9178">&quot;<span class="cjk">未</span><span class="cjk">定</span><span class="cjk">义</span>&quot;</span></div>
<div class="a code" style="left:0px;top:61px;height:54px;line-height:54px;width:118px;text-align:right;color:#6e7681">12</div>
<div class="a code" style="left:172px;top:115px;height:54px;line-height:54px;">  <span style="color:#9cdcfe">&quot;tree.usedInfo.undefinedAutoTranslateEnabled&quot;</span><span style="color:#cccccc">: </span><span style="color:#ce9178">&quot;<span class="cjk">未</span><span class="cjk">定</span><span class="cjk">义</span>&quot;</span></div>
<div class="a code" style="left:0px;top:115px;height:54px;line-height:54px;width:118px;text-align:right;color:#6e7681">11</div>
<div class="a code" style="left:172px;top:169px;height:54px;line-height:54px;">  <span style="color:#9cdcfe">&quot;tree.usedInfo.undefinedNoSourceLang&quot;</span><span style="color:#cccccc">: </span><span style="color:#ce9178">&quot;<span class="cjk">文</span><span class="cjk">本</span><span class="cjk">不</span><span class="cjk">存</span><span class="cjk">在</span>&quot;</span></div>
<div class="a code" style="left:0px;top:169px;height:54px;line-height:54px;width:118px;text-align:right;color:#6e7681">10</div>
<div class="a code" style="left:172px;top:223px;height:54px;line-height:54px;">  <span style="color:#9cdcfe">&quot;tree.usedInfo.undefinedPossibleVariable&quot;</span><span style="color:#cccccc">: </span><span style="color:#ce9178">&quot;<span class="cjk">可</span><span class="cjk">能</span>&quot;</span></div>
<div class="a code" style="left:0px;top:223px;height:54px;line-height:54px;width:118px;text-align:right;color:#6e7681">9</div>
<div class="a code" style="left:172px;top:277px;height:54px;line-height:54px;">  <span style="color:#9cdcfe">&quot;tree.usedInfo.undefinedValidLang&quot;</span><span style="color:#cccccc">: </span><span style="color:#ce9178">&quot;<span class="cjk">文</span><span class="cjk">本</span><span class="cjk">不</span><span class="cjk">符</span><span class="cjk">合</span>&quot;</span></div>
<div class="a code" style="left:0px;top:277px;height:54px;line-height:54px;width:118px;text-align:right;color:#6e7681">8</div>
<div class="a code" style="left:172px;top:331px;height:54px;line-height:54px;">  <span style="color:#9cdcfe">&quot;tree.usedInfo.unused&quot;</span><span style="color:#cccccc">: </span><span style="color:#ce9178">&quot;<span class="cjk">未</span><span class="cjk">使</span><span class="cjk">用</span>&quot;</span><span style="color:#cccccc">,</span></div>
<div class="a code" style="left:0px;top:331px;height:54px;line-height:54px;width:118px;text-align:right;color:#6e7681">7</div>
<div class="a code" style="left:172px;top:385px;height:54px;line-height:54px;">  <span style="color:#9cdcfe">&quot;tree.usedInfo.used&quot;</span><span style="color:#cccccc">: </span><span style="color:#ce9178">&quot;<span class="cjk">已</span><span class="cjk">使</span><span class="cjk">用</span>&quot;</span><span style="color:#cccccc">,</span></div>
<div class="a code" style="left:0px;top:385px;height:54px;line-height:54px;width:118px;text-align:right;color:#6e7681">6</div>
<div class="a code" style="left:172px;top:439px;height:54px;line-height:54px;">  <span style="color:#9cdcfe">&quot;command.packagejsonContainsI18nRelatedKeywords&quot;</span></div>
<div class="a code" style="left:0px;top:439px;height:54px;line-height:54px;width:118px;text-align:right;color:#6e7681">5</div>
<div class="a code" style="left:172px;top:493px;height:54px;line-height:54px;">  <span style="color:#9cdcfe">&quot;command.detectedI18nProjectScore&quot;</span><span style="color:#cccccc">: </span><span style="color:#ce9178">&quot;<span class="cjk">检</span><span class="cjk">测</span> i18n&quot;</span></div>
<div class="a code" style="left:0px;top:493px;height:54px;line-height:54px;width:118px;text-align:right;color:#6e7681">4</div>
<div class="a code" style="left:172px;top:547px;height:54px;line-height:54px;">  <span style="color:#9cdcfe">&quot;command.detectedI18nProjectSignals&quot;</span><span style="color:#cccccc">: </span><span style="color:#ce9178">&quot;<span class="cjk">检</span><span class="cjk">测</span> </span></div>
<div class="a code" style="left:0px;top:547px;height:54px;line-height:54px;width:118px;text-align:right;color:#6e7681">3</div>
<div class="a code" style="left:172px;top:601px;height:54px;line-height:54px;">  <span style="color:#9cdcfe">&quot;command.failedToExtractObjectContent&quot;</span><span style="color:#cccccc">: </span><span style="color:#ce9178">&quot;<span class="cjk">未</span> </span></div>
<div class="a code" style="left:0px;top:601px;height:54px;line-height:54px;width:118px;text-align:right;color:#6e7681">2</div>
<div class="a code" style="left:172px;top:655px;height:54px;line-height:54px;"><span style="color:#ffd700">}</span></div>
<div class="a code" style="left:0px;top:655px;height:54px;line-height:54px;width:118px;text-align:right;color:#6e7681">1</div>
<div class="a code" style="left:0px;top:709px;height:54px;line-height:54px;width:118px;text-align:right;color:#cccccc">401</div>
</div>
<div class="a" style="left:2848px;top:180px;width:1px;height:1087px;background:#161616;"></div>
<div class="a" style="left:2849px;top:1211px;width:13px;height:4px;background:#7a7a7a;"></div>
<div class="a t" style="left:1387px;top:1275.36px;line-height:29px;font-size:23.5px;color:#cccccc;font-family:'Liberation Sans', sans-serif;">main*</div>
<div class="a t" style="left:1660px;top:1275.36px;line-height:29px;font-size:23.5px;color:#cccccc;font-family:'Liberation Sans', sans-serif;">Launchpad</div>
<div class="a t" style="left:1845.6px;top:1275.36px;line-height:29px;font-size:23.5px;color:#cccccc;font-family:'Liberation Sans', sans-serif;">0</div>
<div class="a t" style="left:1904px;top:1275.36px;line-height:29px;font-size:23.5px;color:#cccccc;font-family:'Liberation Sans', sans-serif;">0</div>
<div class="a t" style="left:1962.5px;top:1275.36px;line-height:29px;font-size:23.5px;color:#cccccc;font-family:'Liberation Sans', sans-serif;">2</div>
<div class="a t" style="left:2007px;top:1275.36px;line-height:29px;font-size:23.5px;color:#cccccc;font-family:'Liberation Sans', sans-serif;">25.35 KiB</div>
<div class="a t" style="left:2137px;top:1275.36px;line-height:29px;font-size:23.5px;color:#cccccc;font-family:'Liberation Sans', sans-serif;">-- NORMAL --</div>
<div class="a t" style="left:2389px;top:1275.36px;line-height:29px;font-size:23.5px;color:#cccccc;font-family:'Liberation Sans', sans-serif;">zh-CN</div>
<div class="a t" style="left:2526.6px;top:1275.36px;line-height:29px;font-size:23.5px;color:#cccccc;font-family:'Liberation Sans', sans-serif;">Prettier</div>
<div class="a t" style="left:2636.6px;top:1275.36px;line-height:29px;font-size:23.5px;color:#cccccc;font-family:'Liberation Sans', sans-serif;">Formatting:</div>
<svg class="a" style="left:0;top:0" width="2862" height="1308" viewBox="0 0 2862 1308" fill="none"><g transform="translate(1272,0)"><path d="M38.4 12.8L47.2 17.2V40.5L38.4 44.8Z" fill="#62a8f0"/><path d="M38.4 12.8V19.5L20.5 35.5L17.6 37.6L15 35.2L16 32.5Z" fill="#3f88d8"/><path d="M15 22.4L17.6 20L20.5 22L38.4 38.2V44.8L16 25Z" fill="#4a8fd6"/><path d="M38.4 19.5L38.4 38.2L28 28.8Z" fill="#1c1b1a"/><path d="M92 20H116M92 28H116M92 35.9H116" stroke="#dddddd" stroke-width="2.2" stroke-linecap="round" stroke-linejoin="round" fill="none" /></g><g transform="translate(1355,0)"><path d="M226.5 19.2L214.3 29.1L226.5 39M214.3 29.1H238.7" stroke="#cccccc" stroke-width="2.2" stroke-linecap="round" stroke-linejoin="round" fill="none" /></g><g transform="translate(1353,0)"><path d="M278.9 19.2L290.6 29.1L278.9 39M290.6 29.1H266.7" stroke="#8a8a8a" stroke-width="2.2" stroke-linecap="round" stroke-linejoin="round" fill="none" /></g><circle cx="1858.00" cy="26.50" r="7.6" stroke="#cccccc" stroke-width="2.2" fill="none"/><path d="M1863.6 32.1L1869.3 38.5" stroke="#cccccc" stroke-width="2.2" stroke-linecap="round" stroke-linejoin="round" fill="none" /><g transform="translate(1605.8,-0.3)"><path d="M609.5 17.4H596.5a3 3 0 0 0-3 3V32a3 3 0 0 0 3 3H599.5V42L607.8 35H617.7a3 3 0 0 0 3-3V30.8" stroke="#cccccc" stroke-width="2.2" stroke-linecap="round" stroke-linejoin="round" fill="none" /><path d="M616.7 11.899999999999999Q617.6600000000001 16.939999999999998 622.7 17.9Q617.6600000000001 18.86 616.7 23.9Q615.74 18.86 610.7 17.9Q615.74 16.939999999999998 616.7 11.899999999999999Z" fill="#cccccc" /><path d="M621.8 20.6Q622.536 24.464 626.4 25.2Q622.536 25.936 621.8 29.799999999999997Q621.064 25.936 617.1999999999999 25.2Q621.064 24.464 621.8 20.6Z" fill="#cccccc" /><path d="M647 25.4L654.6 33L662.2 25.4" stroke="#cccccc" stroke-width="2.2" stroke-linecap="round" stroke-linejoin="round" fill="none" /><circle cx="703.3" cy="29" r="8.5" fill="#d0d0d0"/></g><g transform="translate(1601.5,0)"><path d="M797.7 17.8a3 3 0 0 1 3-3H806.6a3 3 0 0 1 3 3V39.9a3 3 0 0 1-3 3H800.7a3 3 0 0 1-3-3Z" stroke="#cccccc" stroke-width="2.2" stroke-linecap="round" stroke-linejoin="round" fill="none" /><path d="M814 17.8a3 3 0 0 1 3-3H822.9a3 3 0 0 1 3 3V24a3 3 0 0 1-3 3H817a3 3 0 0 1-3-3Z" stroke="#cccccc" stroke-width="2.2" stroke-linecap="round" stroke-linejoin="round" fill="none" /><path d="M814 34.1a3 3 0 0 1 3-3H822.9a3 3 0 0 1 3 3V39.9a3 3 0 0 1-3 3H817a3 3 0 0 1-3-3Z" stroke="#cccccc" stroke-width="2.2" stroke-linecap="round" stroke-linejoin="round" fill="none" /><path d="M849.9 19.8a5 5 0 0 1 5-5H873a5 5 0 0 1 5 5V37.9a5 5 0 0 1-5 5H854.9a5 5 0 0 1-5-5Z" stroke="#cccccc" stroke-width="2.2" stroke-linecap="round" stroke-linejoin="round" fill="none" /><path d="M849.9 19.8a5 5 0 0 1 5-5H861.7V42.9H854.9a5 5 0 0 1-5-5Z" fill="#cccccc" /><path d="M901.7 19.8a5 5 0 0 1 5-5H924.8a5 5 0 0 1 5 5V37.9a5 5 0 0 1-5 5H906.7a5 5 0 0 1-5-5ZM901.7 33.9H929.8" stroke="#cccccc" stroke-width="2.2" stroke-linecap="round" stroke-linejoin="round" fill="none" /><path d="M953.8 19.8a5 5 0 0 1 5-5H976.9a5 5 0 0 1 5 5V37.9a5 5 0 0 1-5 5H958.8a5 5 0 0 1-5-5ZM970.9 14.8V42.9" stroke="#cccccc" stroke-width="2.2" stroke-linecap="round" stroke-linejoin="round" fill="none" /><path d="M1033 30H1053" stroke="#cccccc" stroke-width="2.2" stroke-linecap="butt" stroke-linejoin="miter" fill="none"/><path d="M1127 20.2H1140.7a3 3 0 0 1 3 3V36.8a3 3 0 0 1-3 3H1127a3 3 0 0 1-3-3V23.2a3 3 0 0 1 3-3Z" stroke="#cccccc" stroke-width="2.2" stroke-linecap="round" stroke-linejoin="round" fill="none" /><path d="M1216 20.2L1236 39.8M1236 20.2L1216 39.8" stroke="#cccccc" stroke-width="2.2" stroke-linecap="round" stroke-linejoin="round" fill="none" /></g><g transform="translate(1271,0)"><g transform="translate(10,78)"><path d="M22 15a3 3 0 0 1 3-3H37L49 24V45a3 3 0 0 1-3 3H25a3 3 0 0 1-3-3Z" stroke="#8b8b8b" stroke-width="3" stroke-linecap="round" stroke-linejoin="round" fill="none" /><path d="M36.5 12V21.5a2.5 2.5 0 0 0 2.5 2.5H49" stroke="#8b8b8b" stroke-width="3" stroke-linecap="round" stroke-linejoin="round" fill="none" /><path d="M15.8 18V46a8.5 8.5 0 0 0 8.5 8.5H44" stroke="#8b8b8b" stroke-width="3" stroke-linecap="round" stroke-linejoin="round" fill="none" /></g><circle cx="40.00" cy="202.00" r="15.5" stroke="#8b8b8b" stroke-width="3" fill="none"/><path d="M51 213L64.5 226.5" stroke="#8b8b8b" stroke-width="3" stroke-linecap="round" stroke-linejoin="round" fill="none" /><g transform="translate(10,270)"><path d="M20.5 31.5V21a3 3 0 0 1 4.5-2.6L49 32a2.5 2.5 0 0 1 0 4.4L35 44" stroke="#8b8b8b" stroke-width="3" stroke-linecap="round" stroke-linejoin="round" fill="none" /><path d="M14.5 41.5H29.5V49a7.5 7.5 0 0 1-15 0Z" stroke="#8b8b8b" stroke-width="3" stroke-linecap="round" stroke-linejoin="round" fill="none" /><path d="M17.5 41a4.5 4.5 0 0 1 9 0" stroke="#8b8b8b" stroke-width="3" stroke-linecap="round" stroke-linejoin="round" fill="none" /><path d="M11 39L14.6 42.5M32.4 39L28.9 42.5M10.4 48.5H14.3M30 48.5H34M11 57.7L14.9 53.8M33 57.7L29.1 53.8" stroke="#8b8b8b" stroke-width="3" stroke-linecap="round" stroke-linejoin="round" fill="none" /></g><circle cx="43.90" cy="400.00" r="22.8" stroke="#d8d8d8" stroke-width="2.2" fill="none"/><path d="M30.3 391.90C36 391.30 40.5 389.00 41.5 385.50C42 383.50 40.5 382.50 38.8 383.10C37.5 383.60 37.4 385.00 38.3 385.50C36.5 385.50 36 383.00 37.5 381.50C39.5 379.70 43.5 379.80 45.5 382.50C47.5 386.00 50 390.00 57.5 391.90C52 392.50 47 392.50 43.9 393.30C40.5 392.50 35.5 392.50 30.3 391.90Z" fill="#d8d8d8" /><path d="M27.6 399.10L30.1 398.10V412.70L28.3 414.10Z" fill="#d8d8d8" /><path d="M25.8 398.90L29.8 397.30" stroke="#d8d8d8" stroke-width="1.8" stroke-linecap="round" stroke-linejoin="round" fill="none" /><path d="M32.8 396.70L36.2 395.70V418.10L33.6 415.70Z" fill="#d8d8d8" /><circle cx="44.30" cy="400.30" r="4.1" stroke="#d8d8d8" stroke-width="2.6" fill="none"/><path d="M42.8 404.10C37.8 406.30 37.8 414.10 43.6 414.40C47.2 414.60 49.2 411.30 47.9 408.80C47.1 407.40 45.2 407.90 45.6 409.50M47.5 412.00L53 405.30" stroke="#d8d8d8" stroke-width="2.4" stroke-linecap="round" stroke-linejoin="round" fill="none" /><path d="M60.2 400.00C58 397.00 52 397.30 52.2 401.50C52.5 405.50 59.8 406.30 60 411.00C60.2 414.30 57 415.80 54.8 416.10" stroke="#d8d8d8" stroke-width="2.7" stroke-linecap="round" stroke-linejoin="round" fill="none" /><g transform="translate(10,460)"><path d="M14.3 22.5a2 2 0 0 1 2-2H30.9V56.5H16.3a2 2 0 0 1-2-2Z" stroke="#8b8b8b" stroke-width="3" stroke-linecap="round" stroke-linejoin="round" fill="none" /><path d="M14.3 38.4H49a2 2 0 0 1 2 2V54.5a2 2 0 0 1-2 2H30.9" stroke="#8b8b8b" stroke-width="3" stroke-linecap="round" stroke-linejoin="round" fill="none" /><path d="M43.8 18.1L53.3 27.6L43.8 37.1L34.3 27.6Z" stroke="#8b8b8b" stroke-width="3" stroke-linecap="round" stroke-linejoin="round" fill="none" /></g><path d="M30.5 572H56.5M35 572V590L27.5 607.5a2 2 0 0 0 2 3H56.5a2 2 0 0 0 2-3L51 590V572" stroke="#8b8b8b" stroke-width="3" stroke-linecap="round" stroke-linejoin="round" fill="none" /><g transform="translate(21.00,665.50) scale(1.9583)"><path d="M22.2819 9.8211a5.9847 5.9847 0 0 0-.5157-4.9108 6.0462 6.0462 0 0 0-6.5098-2.9A6.0651 6.0651 0 0 0 4.9807 4.1818a5.9847 5.9847 0 0 0-3.9977 2.9 6.0462 6.0462 0 0 0 .7427 7.0966 5.98 5.98 0 0 0 .511 4.9107 6.051 6.051 0 0 0 6.5146 2.9001A5.9847 5.9847 0 0 0 13.2599 24a6.0557 6.0557 0 0 0 5.7718-4.2058 5.9894 5.9894 0 0 0 3.9977-2.9001 6.0557 6.0557 0 0 0-.7475-7.0729zm-9.022 12.6081a4.4755 4.4755 0 0 1-2.8764-1.0408l.1419-.0804 4.7783-2.7582a.7948.7948 0 0 0 .3927-.6813v-6.7369l2.02 1.1686a.071.071 0 0 1 .038.052v5.5826a4.504 4.504 0 0 1-4.4945 4.4944zm-9.6607-4.1254a4.4708 4.4708 0 0 1-.5346-3.0137l.142.0852 4.783 2.7582a.7712.7712 0 0 0 .7806 0l5.8428-3.3685v2.3324a.0804.0804 0 0 1-.0332.0615L9.74 19.9502a4.4992 4.4992 0 0 1-6.1408-1.6464zM2.3408 7.8956a4.485 4.485 0 0 1 2.3655-1.9728V11.6a.7664.7664 0 0 0 .3879.6765l5.8144 3.3543-2.0201 1.1685a.0757.0757 0 0 1-.071 0l-4.8303-2.7865A4.504 4.504 0 0 1 2.3408 7.872zm16.5963 3.8558L13.1038 8.364 15.1192 7.2a.0757.0757 0 0 1 .071 0l4.8303 2.7913a4.4944 4.4944 0 0 1-.6765 8.1042v-5.6772a.79.79 0 0 0-.407-.667zm2.0107-3.0231l-.142-.0852-4.7735-2.7818a.7759.7759 0 0 0-.7854 0L9.409 9.2297V6.8974a.0662.0662 0 0 1 .0284-.0615l4.8303-2.7866a4.4992 4.4992 0 0 1 6.6802 4.66zM8.3065 12.863l-2.02-1.1638a.0804.0804 0 0 1-.038-.0567V6.0742a4.4992 4.4992 0 0 1 7.3757-3.4537l-.142.0805L8.704 5.459a.7948.7948 0 0 0-.3927.6813zm1.0976-2.3654l2.602-1.4998 2.6069 1.4998v2.9994l-2.5974 1.4997-2.6067-1.4997Z" fill="#8b8b8b"/></g><g transform="translate(10,745)"><circle cx="23.50" cy="22.30" r="5.9" stroke="#8b8b8b" stroke-width="3" fill="none"/><circle cx="44.30" cy="31.20" r="5.9" stroke="#8b8b8b" stroke-width="3" fill="none"/><circle cx="23.50" cy="55.60" r="5.9" stroke="#8b8b8b" stroke-width="3" fill="none"/><path d="M23.5 28.2V49.7" stroke="#8b8b8b" stroke-width="3" stroke-linecap="round" stroke-linejoin="round" fill="none" /><path d="M23.5 47a4.5 4.5 0 0 1 4.5-4.5H38a6 6 0 0 0 6.3-5.4" stroke="#8b8b8b" stroke-width="3" stroke-linecap="round" stroke-linejoin="round" fill="none" /></g><circle cx="60" cy="799.4" r="15.7" fill="#4a7bd0"/><text x="60.5" y="806.9" text-anchor="middle" font-family="Liberation Sans" font-weight="bold" font-size="21" fill="#ffffff">1</text><path d="M34.4 1772.3L22 1784.5L36.2 1798.2L48.6 1785.8" stroke="#8b8b8b" stroke-width="4.6" stroke-linecap="round" stroke-linejoin="round" fill="none" /><path d="M53.3 1797.3L65.5 1785.2L51.6 1771.6L39.2 1783.8" stroke="#8b8b8b" stroke-width="4.6" stroke-linecap="round" stroke-linejoin="round" fill="none" /><path d="M38.5 1784.5H49.5" stroke="#1b1a18" stroke-width="1.2" stroke-linecap="butt" stroke-linejoin="miter" fill="none"/><circle cx="30.50" cy="880.00" r="2.8" stroke="none" stroke-width="0" fill="#8b8b8b"/><circle cx="44.00" cy="880.00" r="2.8" stroke="none" stroke-width="0" fill="#8b8b8b"/><circle cx="57.50" cy="880.00" r="2.8" stroke="none" stroke-width="0" fill="#8b8b8b"/><circle cx="44.00" cy="1122.00" r="19.8" stroke="#8b8b8b" stroke-width="3" fill="none"/><circle cx="44.00" cy="1114.00" r="5.3" stroke="none" stroke-width="0" fill="#8b8b8b"/><path d="M33.5 1123H54.5V1125a10.5 9.5 0 0 1-21 0Z" fill="#8b8b8b" /><path d="M58.31 1220.35 L63.36 1223.00 L61.23 1228.16 L55.78 1226.46 L52.46 1229.78 L54.16 1235.23 L49.00 1237.36 L46.35 1232.31 L41.65 1232.31 L39.00 1237.36 L33.84 1235.23 L35.54 1229.78 L32.22 1226.46 L26.77 1228.16 L24.64 1223.00 L29.69 1220.35 L29.69 1215.65 L24.64 1213.00 L26.77 1207.84 L32.22 1209.54 L35.54 1206.22 L33.84 1200.77 L39.00 1198.64 L41.65 1203.69 L46.35 1203.69 L49.00 1198.64 L54.16 1200.77 L52.46 1206.22 L55.78 1209.54 L61.23 1207.84 L63.36 1213.00 L58.31 1215.65Z" stroke="#8b8b8b" stroke-width="3" stroke-linecap="round" stroke-linejoin="round" fill="none" /><circle cx="44.00" cy="1218.00" r="5" stroke="#8b8b8b" stroke-width="3" fill="none"/><circle cx="60" cy="1235" r="15.7" fill="#4a7bd0"/><text x="60.5" y="1242.5" text-anchor="middle" font-family="Liberation Sans" font-weight="bold" font-size="21" fill="#ffffff">1</text></g><g transform="translate(1272,0)"><path d="M180.5 104A12.3 12.3 0 1 1 178.8 91.2" stroke="#cccccc" stroke-width="2.2" stroke-linecap="round" stroke-linejoin="round" fill="none" /><path d="M183.1 90.3L182.6 97.9L175.3 95.8" stroke="#cccccc" stroke-width="2.2" stroke-linecap="round" stroke-linejoin="round" fill="none" /><circle cx="220.65" cy="98.75" r="11.1" stroke="#cccccc" stroke-width="2.2" fill="none"/><path d="M228.8 107.2L234.8 112.6" stroke="#cccccc" stroke-width="2.4" stroke-linecap="round" stroke-linejoin="round" fill="none" /><path d="M270 93.3V88.4a2 2 0 0 1 2-2H284.3a2 2 0 0 1 2 2V111.9a2 2 0 0 1-2 2H267.2a2 2 0 0 1-2-2V106.6" stroke="#cccccc" stroke-width="2.2" stroke-linecap="round" stroke-linejoin="round" fill="none" /><path d="M262.2 94.4H273.4V105.5H262.2Z" stroke="#cccccc" stroke-width="2.2" stroke-linecap="round" stroke-linejoin="round" fill="none" /><path d="M265.3 97.5L270.3 102.5M270.3 97.5L265.3 102.5" stroke="#cccccc" stroke-width="2" stroke-linecap="round" stroke-linejoin="round" fill="none" /><path d="M277.4 93.9H282.9M277.4 99H282.9M277.4 104.7H282.9" stroke="#cccccc" stroke-width="2.2" stroke-linecap="round" stroke-linejoin="round" fill="none" /><path d="M323.6 96.9V86.2M320.1 90L323.6 86.4L327.4 90" stroke="#cccccc" stroke-width="2.2" stroke-linecap="round" stroke-linejoin="round" fill="none" /><path d="M319 94H315.7V114.4H336.1V94H328" stroke="#cccccc" stroke-width="2.2" stroke-linecap="round" stroke-linejoin="round" fill="none" /><path d="M320.7 101H331.5M320.7 105H331.5M320.7 108.8H328.8" stroke="#cccccc" stroke-width="2.2" stroke-linecap="round" stroke-linejoin="round" fill="none" /><g transform="translate(-51,0)"><path d="M416.5 114.4L434 96.9" stroke="#cccccc" stroke-width="2.2" stroke-linecap="round" stroke-linejoin="round" fill="none" /><path d="M434 86.4V91.6M434 102.6V107.4M423.8 96.9H429M439.3 96.9H445M427 89.6L429.6 92.2M441 89.6L438.4 92.2M438.4 101.6L441 104.2" stroke="#cccccc" stroke-width="2" stroke-linecap="round" stroke-linejoin="round" fill="none" /></g></g><circle cx="1692.00" cy="100.00" r="2.4" stroke="none" stroke-width="0" fill="#cccccc"/><circle cx="1700.00" cy="100.00" r="2.4" stroke="none" stroke-width="0" fill="#cccccc"/><g transform="translate(1271,0)"><path d="M125 147.5L136 157L125 166.5" stroke="#cccccc" stroke-width="2.2" stroke-linecap="round" stroke-linejoin="round" fill="none" /><path d="M125 191.5L136 201L125 210.5" stroke="#cccccc" stroke-width="2.2" stroke-linecap="round" stroke-linejoin="round" fill="none" /><path d="M125 235.5L136 245L125 254.5" stroke="#cccccc" stroke-width="2.2" stroke-linecap="round" stroke-linejoin="round" fill="none" /><path d="M125 279.5L136 289L125 298.5" stroke="#cccccc" stroke-width="2.2" stroke-linecap="round" stroke-linejoin="round" fill="none" /><path d="M159.3 146.9a2.5 2.5 0 0 1 2.5-2.5H169.3L176.8 151.9V167.4a2.5 2.5 0 0 1-2.5 2.5H161.8a2.5 2.5 0 0 1-2.5-2.5Z" stroke="#cccccc" stroke-width="2.2" stroke-linecap="round" stroke-linejoin="round" fill="none" /><path d="M169.3 144.4V149.9a2 2 0 0 0 2 2H176.8" stroke="#cccccc" stroke-width="2" stroke-linecap="round" stroke-linejoin="round" fill="none" /><path d="M162 208.9A10.2 10.2 0 0 1 169 190.20000000000002" stroke="#cccccc" stroke-width="2.2" stroke-linecap="round" stroke-linejoin="round" fill="none" /><path d="M166 186.9L169.5 190.20000000000002L166 193.6" stroke="#cccccc" stroke-width="2.2" stroke-linecap="round" stroke-linejoin="round" fill="none" /><path d="M174 191.9A10.2 10.2 0 0 1 167 210.6" stroke="#cccccc" stroke-width="2.2" stroke-linecap="round" stroke-linejoin="round" fill="none" /><path d="M170 213.9L166.5 210.6L170 207.20000000000002" stroke="#cccccc" stroke-width="2.2" stroke-linecap="round" stroke-linejoin="round" fill="none" /><path d="M154.9 244.89999999999998H161.0V258.4H154.9Z" stroke="#cccccc" stroke-width="2.2" stroke-linecap="round" stroke-linejoin="round" fill="none" /><path d="M165.3 240.39999999999998H170.70000000000002V258.4H165.3Z" stroke="#cccccc" stroke-width="2.2" stroke-linecap="round" stroke-linejoin="round" fill="none" /><path d="M175.70000000000002 232.79999999999998H181.1V258.4H175.70000000000002Z" stroke="#cccccc" stroke-width="2.2" stroke-linecap="round" stroke-linejoin="round" fill="none" /><path d="M159.7 276.6H174.0a2.5 2.5 0 0 1 2.5 2.5V298.7a2.5 2.5 0 0 1-2.5 2.5H159.7a2.5 2.5 0 0 1-2.5-2.5V279.1a2.5 2.5 0 0 1 2.5-2.5Z" stroke="#cccccc" stroke-width="2.2" stroke-linecap="round" stroke-linejoin="round" fill="none" /><path d="M161.6 281.0H171.6V283.7H161.6Z" stroke="#cccccc" stroke-width="2" stroke-linecap="round" stroke-linejoin="round" fill="none" /><path d="M181.0 281.5V284.5M181.0 287.0V290.5M181.0 293.0V296.5" stroke="#cccccc" stroke-width="2.2" stroke-linecap="butt" stroke-linejoin="miter" fill="none"/></g><g transform="translate(1600,0)"><path d="M802 89.5a1.5 1.5 0 0 1 2.2-1.3L822.6 98.3a1.5 1.5 0 0 1 0 2.6L804.2 111a1.5 1.5 0 0 1-2.2-1.3Z" stroke="#cccccc" stroke-width="2.2" stroke-linecap="round" stroke-linejoin="round" fill="none" /><path d="M852.8 100A11.1 11.1 0 1 0 857.5 90.2" stroke="#cccccc" stroke-width="2.2" stroke-linecap="round" stroke-linejoin="round" fill="none" /><path d="M853.6 88.5V95.4H860.5" stroke="#cccccc" stroke-width="2.2" stroke-linecap="round" stroke-linejoin="round" fill="none" /><path d="M862.6 93.7V100.9H867.7" stroke="#cccccc" stroke-width="2.2" stroke-linecap="round" stroke-linejoin="round" fill="none" /><g transform="translate(900.00,84.10) scale(1.2917)"><path d="M22.2819 9.8211a5.9847 5.9847 0 0 0-.5157-4.9108 6.0462 6.0462 0 0 0-6.5098-2.9A6.0651 6.0651 0 0 0 4.9807 4.1818a5.9847 5.9847 0 0 0-3.9977 2.9 6.0462 6.0462 0 0 0 .7427 7.0966 5.98 5.98 0 0 0 .511 4.9107 6.051 6.051 0 0 0 6.5146 2.9001A5.9847 5.9847 0 0 0 13.2599 24a6.0557 6.0557 0 0 0 5.7718-4.2058 5.9894 5.9894 0 0 0 3.9977-2.9001 6.0557 6.0557 0 0 0-.7475-7.0729zm-9.022 12.6081a4.4755 4.4755 0 0 1-2.8764-1.0408l.1419-.0804 4.7783-2.7582a.7948.7948 0 0 0 .3927-.6813v-6.7369l2.02 1.1686a.071.071 0 0 1 .038.052v5.5826a4.504 4.504 0 0 1-4.4945 4.4944zm-9.6607-4.1254a4.4708 4.4708 0 0 1-.5346-3.0137l.142.0852 4.783 2.7582a.7712.7712 0 0 0 .7806 0l5.8428-3.3685v2.3324a.0804.0804 0 0 1-.0332.0615L9.74 19.9502a4.4992 4.4992 0 0 1-6.1408-1.6464zM2.3408 7.8956a4.485 4.485 0 0 1 2.3655-1.9728V11.6a.7664.7664 0 0 0 .3879.6765l5.8144 3.3543-2.0201 1.1685a.0757.0757 0 0 1-.071 0l-4.8303-2.7865A4.504 4.504 0 0 1 2.3408 7.872zm16.5963 3.8558L13.1038 8.364 15.1192 7.2a.0757.0757 0 0 1 .071 0l4.8303 2.7913a4.4944 4.4944 0 0 1-.6765 8.1042v-5.6772a.79.79 0 0 0-.407-.667zm2.0107-3.0231l-.142-.0852-4.7735-2.7818a.7759.7759 0 0 0-.7854 0L9.409 9.2297V6.8974a.0662.0662 0 0 1 .0284-.0615l4.8303-2.7866a4.4992 4.4992 0 0 1 6.6802 4.66zM8.3065 12.863l-2.02-1.1638a.0804.0804 0 0 1-.038-.0567V6.0742a4.4992 4.4992 0 0 1 7.3757-3.4537l-.142.0805L8.704 5.459a.7948.7948 0 0 0-.3927.6813zm1.0976-2.3654l2.602-1.4998 2.6069 1.4998v2.9994l-2.5974 1.4997-2.6067-1.4997Z" fill="#ffffff"/></g><path d="M959.2 92.4L951.8 98.8L959.2 105.6M951.8 98.8H963.8" stroke="#cccccc" stroke-width="2.2" stroke-linecap="round" stroke-linejoin="round" fill="none" /><circle cx="973.20" cy="98.80" r="9.2" stroke="#cccccc" stroke-width="2.2" fill="none"/><path d="M982.4 98.8H984" stroke="#cccccc" stroke-width="2.2" stroke-linecap="round" stroke-linejoin="round" fill="none" /><circle cx="1020.90" cy="98.90" r="9" stroke="#8a8a8a" stroke-width="2.2" fill="none"/><path d="M1005.8 98.9H1011.9M1029.9 98.9H1036.4" stroke="#8a8a8a" stroke-width="2.2" stroke-linecap="round" stroke-linejoin="round" fill="none" /><circle cx="1067.50" cy="98.90" r="9" stroke="#8a8a8a" stroke-width="2.2" fill="none"/><path d="M1055.8 98.9H1058.5M1076.5 98.9H1087.9M1080.6 92.1L1087.9 98.9L1080.6 105.7" stroke="#8a8a8a" stroke-width="2.2" stroke-linecap="round" stroke-linejoin="round" fill="none" /><circle cx="1124.30" cy="99.90" r="15.3" stroke="#cccccc" stroke-width="2.2" fill="none"/><path d="M1121.4 92.1V107.7M1121.4 92.1L1129.6 100.4" stroke="#cccccc" stroke-width="2.2" stroke-linecap="round" stroke-linejoin="round" fill="none" /><circle cx="1121.40" cy="92.10" r="3.3" stroke="none" stroke-width="0" fill="#cccccc"/><circle cx="1121.40" cy="107.70" r="3.3" stroke="none" stroke-width="0" fill="#cccccc"/><circle cx="1129.60" cy="100.40" r="3.3" stroke="none" stroke-width="0" fill="#cccccc"/><path d="M1165.6 86.3H1186.8a3 3 0 0 1 3 3V110.5a3 3 0 0 1-3 3H1165.6a3 3 0 0 1-3-3V89.3a3 3 0 0 1 3-3ZM1176.2 86.3V113.5" stroke="#cccccc" stroke-width="2.2" stroke-linecap="round" stroke-linejoin="round" fill="none" /><circle cx="1219.90" cy="99.90" r="2.4" stroke="none" stroke-width="0" fill="#cccccc"/><circle cx="1228.00" cy="99.90" r="2.4" stroke="none" stroke-width="0" fill="#cccccc"/><circle cx="1236.00" cy="99.90" r="2.4" stroke="none" stroke-width="0" fill="#cccccc"/></g><path d="M1912 90.5L1930.5 106.3M1930.5 90.5L1912 106.3" stroke="#ffffff" stroke-width="2.2" stroke-linecap="round" stroke-linejoin="round" fill="none" /><path d="M1740.0 89.2C1737.5 89.2 1736.7 90.7 1736.7 93.2V97.2C1736.7 98.9 1735.5 99.7 1734.0 99.7C1735.5 99.7 1736.7 100.5 1736.7 102.2V106.2C1736.7 108.7 1737.5 110.2 1740.0 110.2M1748.0 89.2C1750.5 89.2 1751.3 90.7 1751.3 93.2V97.2C1751.3 98.9 1752.5 99.7 1754.0 99.7C1752.5 99.7 1751.3 100.5 1751.3 102.2V106.2C1751.3 108.7 1750.5 110.2 1748.0 110.2" stroke="#cbcb41" stroke-width="2.3" stroke-linecap="round" stroke-linejoin="round" fill="none" /><path d="M1926.0 146C1923.5 146 1922.7 147.5 1922.7 150V154.0C1922.7 155.7 1921.5 156.5 1920.0 156.5C1921.5 156.5 1922.7 157.3 1922.7 159.0V163C1922.7 165.5 1923.5 167 1926.0 167M1934.0 146C1936.5 146 1937.3 147.5 1937.3 150V154.0C1937.3 155.7 1938.5 156.5 1940.0 156.5C1938.5 156.5 1937.3 157.3 1937.3 159.0V163C1937.3 165.5 1936.5 167 1934.0 167" stroke="#cbcb41" stroke-width="2.3" stroke-linecap="round" stroke-linejoin="round" fill="none" /><g transform="translate(1238,0)"><path d="M541.5 148.3L551.5 157.3L541.5 166.3" stroke="#a9a9a9" stroke-width="2" stroke-linecap="round" stroke-linejoin="round" fill="none" /></g><g transform="translate(1274,0)"><path d="M623 148.3L633 157.3L623 166.3" stroke="#a9a9a9" stroke-width="2" stroke-linecap="round" stroke-linejoin="round" fill="none" /></g><g transform="translate(1346,0)"><path d="M750.3 148.3L760.3 157.3L750.3 166.3" stroke="#a9a9a9" stroke-width="2" stroke-linecap="round" stroke-linejoin="round" fill="none" /></g><path d="M2118.6 664.3L2124.6 668.7L2130.6 664.3L2136.6 668.7L2142.6 664.3L2148.6 668.7L2154.6 664.3L2160.6 668.7L2166.6 664.3L2172.6 668.7L2178.6 664.3L2184.6 668.7L2190.6 664.3L2196.6 668.7L2202.6 664.3L2208.6 668.7L2214.6 664.3L2220.6 668.7L2226.6 664.3L2232.6 668.7L2238.6 664.3L2244.6 668.7L2250.6 664.3L2256.6 668.7L2262.6 664.3L2268.6 668.7L2274.6 664.3L2280.6 668.7L2286.6 664.3L2292.6 668.7L2298.6 664.3L2304.6 668.7L2310.6 664.3L2316.6 668.7L2322.6 664.3L2328.6 668.7L2334.6 664.3L2340.6 668.7L2346.6 664.3L2352.6 668.7L2358.6 664.3" stroke="#3794ff" stroke-width="1.8" fill="none"/><path d="M1290 1288L1297.5 1295.5L1290 1303M1311.5 1278L1304 1285.5L1311.5 1293" stroke="#cccccc" stroke-width="2" stroke-linecap="round" stroke-linejoin="round" fill="none" /><circle cx="1356.50" cy="1280.00" r="3.8" stroke="#cccccc" stroke-width="2" fill="none"/><circle cx="1356.50" cy="1302.50" r="3.8" stroke="#cccccc" stroke-width="2" fill="none"/><path d="M1356.5 1284V1298.5" stroke="#cccccc" stroke-width="2" stroke-linecap="round" stroke-linejoin="round" fill="none" /><path d="M1365.5 1289V1286a4.3 4.3 0 0 1 8.6 0V1289" stroke="#cccccc" stroke-width="2" stroke-linecap="round" stroke-linejoin="round" fill="none" /><circle cx="1372" cy="1298" r="8.3" fill="#cccccc"/><path d="M1372 1293V1303M1367.7 1295.5L1376.3 1300.5M1376.3 1295.5L1367.7 1300.5" stroke="#1c1b1a" stroke-width="1.8" stroke-linecap="round" stroke-linejoin="round" fill="none" /><path d="M1469 1297A11 11 0 0 1 1479 1279" stroke="#cccccc" stroke-width="2" stroke-linecap="round" stroke-linejoin="round" fill="none" /><path d="M1475.5 1275.5L1479.5 1279L1475.5 1282.5" stroke="#cccccc" stroke-width="2" stroke-linecap="round" stroke-linejoin="round" fill="none" /><path d="M1485 1283A11 11 0 0 1 1475 1301" stroke="#cccccc" stroke-width="2" stroke-linecap="round" stroke-linejoin="round" fill="none" /><path d="M1478.5 1304.5L1474.5 1301L1478.5 1297.5" stroke="#cccccc" stroke-width="2" stroke-linecap="round" stroke-linejoin="round" fill="none" /><circle cx="1530.00" cy="1280.00" r="3.8" stroke="#cccccc" stroke-width="2" fill="none"/><circle cx="1530.00" cy="1300.00" r="3.8" stroke="#cccccc" stroke-width="2" fill="none"/><circle cx="1547.00" cy="1290.50" r="3.8" stroke="#cccccc" stroke-width="2" fill="none"/><path d="M1530 1284V1296M1538 1276V1306M1547 1294.5V1297a3 3 0 0 1-3 3H1534" stroke="#cccccc" stroke-width="2" stroke-linecap="round" stroke-linejoin="round" fill="none" /><path d="M1599 1296L1596.5 1293.5C1599 1285 1605 1279 1615 1277.5C1614 1287 1608 1293 1601 1298Z" stroke="#cccccc" stroke-width="2" stroke-linecap="round" stroke-linejoin="round" fill="none" /><circle cx="1607.50" cy="1286.50" r="2.5" stroke="#cccccc" stroke-width="1.8" fill="none"/><path d="M1594 1301L1597 1298M1592.5 1297L1595 1294.5M1598 1302.5L1600.5 1300" stroke="#cccccc" stroke-width="1.8" stroke-linecap="round" stroke-linejoin="round" fill="none" /><path d="M1624 1303L1629 1298M1629 1298L1633 1302L1642 1293L1634 1285L1625 1294Z" stroke="#cccccc" stroke-width="2" stroke-linecap="round" stroke-linejoin="round" fill="none" /><path d="M1641 1286L1647 1280M1637 1283L1642 1278M1645 1290L1649 1286" stroke="#cccccc" stroke-width="2" stroke-linecap="round" stroke-linejoin="round" fill="none" /><circle cx="1822.50" cy="1290.00" r="12.5" stroke="#cccccc" stroke-width="2" fill="none"/><path d="M1817.5 1285L1827.5 1295M1827.5 1285L1817.5 1295" stroke="#cccccc" stroke-width="2" stroke-linecap="round" stroke-linejoin="round" fill="none" /><path d="M1881.5 1277L1895 1302H1868Z" stroke="#cccccc" stroke-width="2" stroke-linecap="round" stroke-linejoin="round" fill="none" /><path d="M1881.5 1286V1294" stroke="#cccccc" stroke-width="2.2" stroke-linecap="round" stroke-linejoin="round" fill="none" /><circle cx="1881.50" cy="1297.50" r="1.5" stroke="none" stroke-width="0" fill="#cccccc"/><circle cx="1939.50" cy="1290.00" r="12.5" stroke="#cccccc" stroke-width="2" fill="none"/><path d="M1939.5 1288V1297" stroke="#cccccc" stroke-width="2.4" stroke-linecap="round" stroke-linejoin="round" fill="none" /><circle cx="1939.50" cy="1283.50" r="1.6" stroke="none" stroke-width="0" fill="#cccccc"/><circle cx="2365.50" cy="1290.00" r="12.5" stroke="#cccccc" stroke-width="2" fill="none"/><path d="M2353 1290H2378M2365.5 1277.5C2359.5 1283 2359.5 1297 2365.5 1302.5M2365.5 1277.5C2371.5 1283 2371.5 1297 2365.5 1302.5M2355.5 1283.5H2375.5M2355.5 1296.5H2375.5" stroke="#cccccc" stroke-width="1.8" stroke-linecap="round" stroke-linejoin="round" fill="none" /><path d="M2490 1291L2496 1297L2498 1295M2497 1291L2503 1297L2518 1281M2502 1291L2510 1282" stroke="#cccccc" stroke-width="2" stroke-linecap="round" stroke-linejoin="round" fill="none" /><path d="M2767 1291L2774 1298L2792 1280" stroke="#cccccc" stroke-width="2.2" stroke-linecap="round" stroke-linejoin="round" fill="none" /><path d="M2833.5 1297.5C2835.5 1294.5 2835.5 1292 2835.5 1287A8.5 8.5 0 0 1 2852.5 1287C2852.5 1292 2852.5 1294.5 2854.5 1297.5ZM2840.5 1299.5a3 3 0 0 0 6 0" stroke="#cccccc" stroke-width="2" stroke-linecap="round" stroke-linejoin="round" fill="none" /><circle cx="2852" cy="1280.5" r="6" fill="#cccccc" stroke="#1b1a18" stroke-width="2.5"/></svg>
<div class="a" style="left:1274px;top:0px;width:58px;height:1308px;background:linear-gradient(90deg, rgba(0,0,0,0.35) 0px, rgba(0,0,0,0.13) 7px, rgba(0,0,0,0.11) 50px, rgba(0,0,0,0) 58px);"></div>
<div class="a" style="left:1272px;top:0px;width:2px;height:1308px;background:#3c3c3c;"></div></body></html>
